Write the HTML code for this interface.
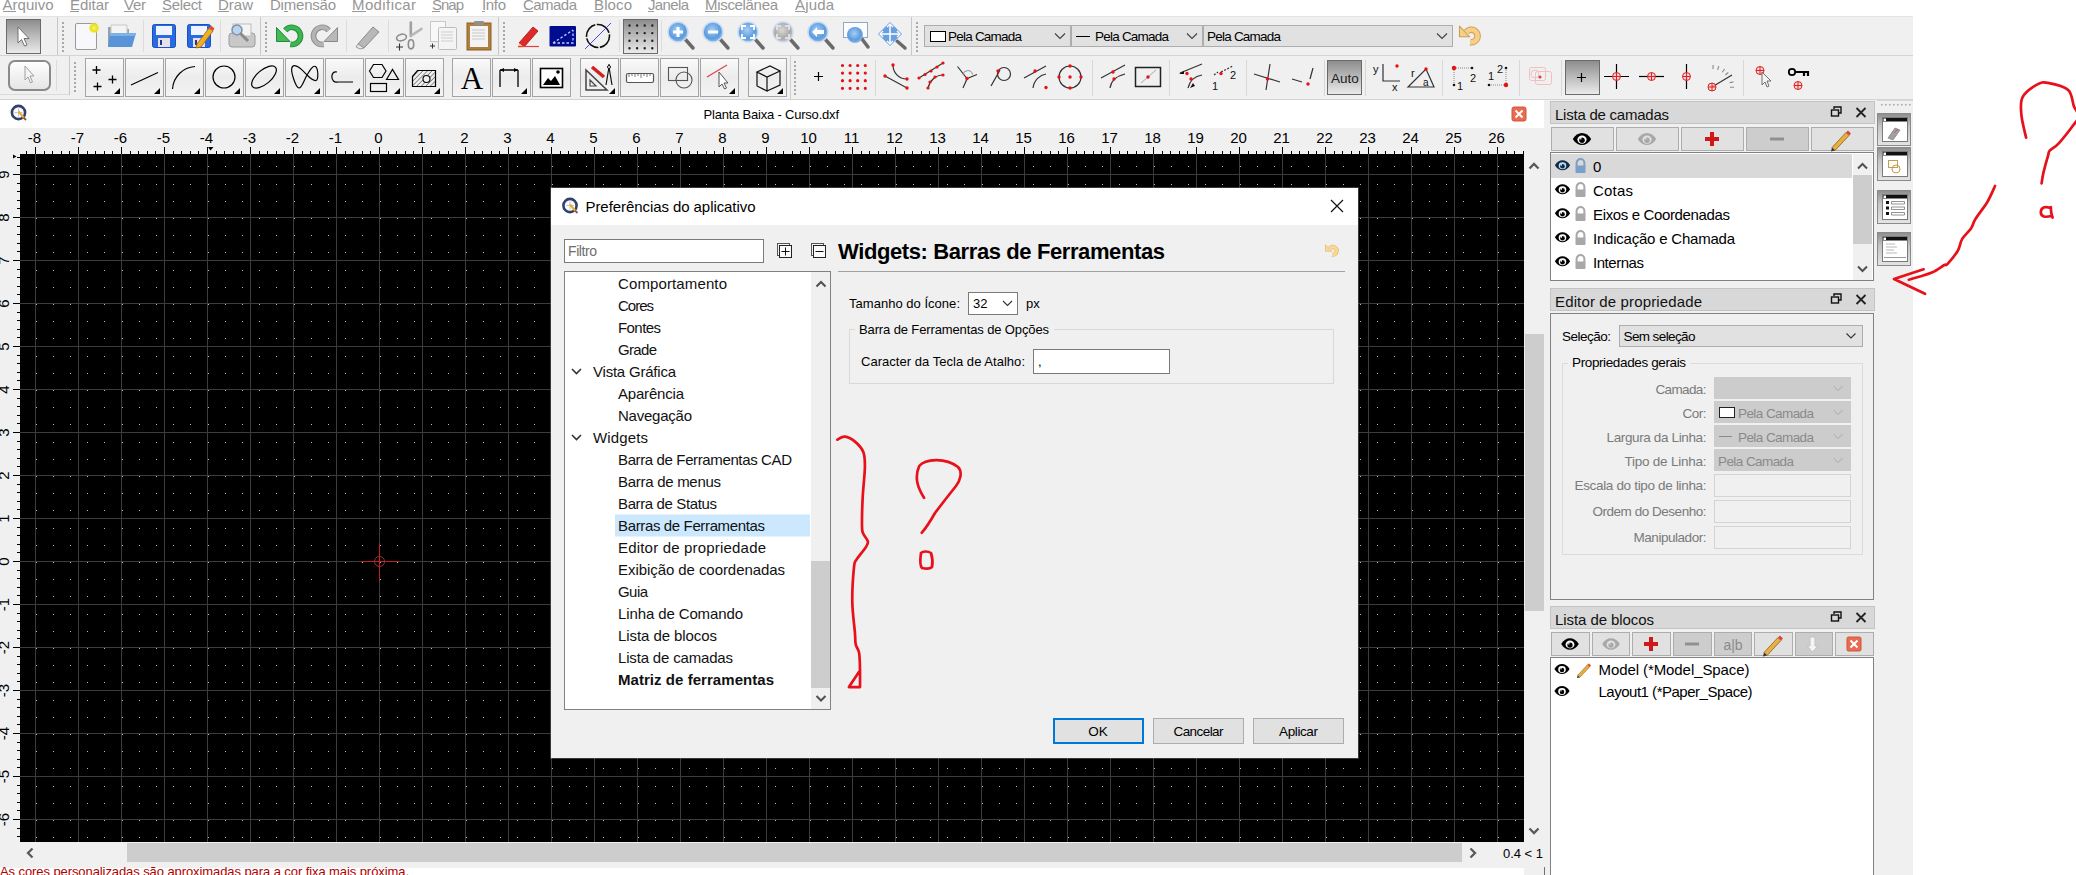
<!DOCTYPE html>
<html><head><meta charset="utf-8"><title>LibreCAD</title>
<style>
*{box-sizing:border-box;margin:0;padding:0}
html,body{width:2076px;height:875px;overflow:hidden;background:#fff;position:relative;font-family:"Liberation Sans",sans-serif;color:#000}
.a{position:absolute}
.t{position:absolute;white-space:nowrap;font-family:"Liberation Sans",sans-serif}
svg{display:block}
</style></head>
<body>

<!-- menu bar -->
<div class="a" style="left:0;top:0;width:1912px;height:16px;background:#fff"></div>
<!-- toolbar area -->
<div class="a" style="left:0;top:16px;width:1913px;height:84px;background:#f0f0f0"></div>
<!-- MDI title -->
<div class="a" style="left:0;top:100px;width:1544px;height:28px;background:#fff"></div>
<!-- rulers bg -->
<div class="a" style="left:0;top:128px;width:1544px;height:747px;background:#f0f0f0"></div>
<svg width="1524" height="26" style="position:absolute;left:0;top:128px" shape-rendering="crispEdges">
<path d="M26.5 23V26 M35.5 19V26 M44.5 23V26 M52.5 23V26 M61.5 23V26 M69.5 23V26 M78.5 19V26 M87.5 23V26 M95.5 23V26 M104.5 23V26 M112.5 23V26 M121.5 19V26 M130.5 23V26 M138.5 23V26 M147.5 23V26 M155.5 23V26 M164.5 19V26 M173.5 23V26 M181.5 23V26 M190.5 23V26 M198.5 23V26 M207.5 19V26 M216.5 23V26 M224.5 23V26 M233.5 23V26 M241.5 23V26 M250.5 19V26 M259.5 23V26 M267.5 23V26 M276.5 23V26 M284.5 23V26 M293.5 19V26 M302.5 23V26 M310.5 23V26 M319.5 23V26 M327.5 23V26 M336.5 19V26 M345.5 23V26 M353.5 23V26 M362.5 23V26 M370.5 23V26 M379.5 19V26 M388.5 23V26 M396.5 23V26 M405.5 23V26 M413.5 23V26 M422.5 19V26 M431.5 23V26 M439.5 23V26 M448.5 23V26 M456.5 23V26 M465.5 19V26 M474.5 23V26 M482.5 23V26 M491.5 23V26 M499.5 23V26 M508.5 19V26 M517.5 23V26 M525.5 23V26 M534.5 23V26 M542.5 23V26 M551.5 19V26 M560.5 23V26 M568.5 23V26 M577.5 23V26 M585.5 23V26 M594.5 19V26 M603.5 23V26 M611.5 23V26 M620.5 23V26 M628.5 23V26 M637.5 19V26 M646.5 23V26 M654.5 23V26 M663.5 23V26 M671.5 23V26 M680.5 19V26 M689.5 23V26 M697.5 23V26 M706.5 23V26 M714.5 23V26 M723.5 19V26 M732.5 23V26 M740.5 23V26 M749.5 23V26 M757.5 23V26 M766.5 19V26 M775.5 23V26 M783.5 23V26 M792.5 23V26 M800.5 23V26 M809.5 19V26 M818.5 23V26 M826.5 23V26 M835.5 23V26 M843.5 23V26 M852.5 19V26 M861.5 23V26 M869.5 23V26 M878.5 23V26 M886.5 23V26 M895.5 19V26 M904.5 23V26 M912.5 23V26 M921.5 23V26 M929.5 23V26 M938.5 19V26 M947.5 23V26 M955.5 23V26 M964.5 23V26 M972.5 23V26 M981.5 19V26 M990.5 23V26 M998.5 23V26 M1007.5 23V26 M1015.5 23V26 M1024.5 19V26 M1033.5 23V26 M1041.5 23V26 M1050.5 23V26 M1058.5 23V26 M1067.5 19V26 M1076.5 23V26 M1084.5 23V26 M1093.5 23V26 M1101.5 23V26 M1110.5 19V26 M1119.5 23V26 M1127.5 23V26 M1136.5 23V26 M1144.5 23V26 M1153.5 19V26 M1162.5 23V26 M1170.5 23V26 M1179.5 23V26 M1187.5 23V26 M1196.5 19V26 M1205.5 23V26 M1213.5 23V26 M1222.5 23V26 M1230.5 23V26 M1239.5 19V26 M1248.5 23V26 M1256.5 23V26 M1265.5 23V26 M1273.5 23V26 M1282.5 19V26 M1291.5 23V26 M1299.5 23V26 M1308.5 23V26 M1316.5 23V26 M1325.5 19V26 M1334.5 23V26 M1342.5 23V26 M1351.5 23V26 M1359.5 23V26 M1368.5 19V26 M1377.5 23V26 M1385.5 23V26 M1394.5 23V26 M1402.5 23V26 M1411.5 19V26 M1420.5 23V26 M1428.5 23V26 M1437.5 23V26 M1445.5 23V26 M1454.5 19V26 M1463.5 23V26 M1471.5 23V26 M1480.5 23V26 M1488.5 23V26 M1497.5 19V26 M1506.5 23V26 M1514.5 23V26 M1523.5 23V26" stroke="#000" fill="none"/>
<text x="34.5" y="15" text-anchor="middle" font-family="Liberation Sans" font-size="15" fill="#000">-8</text>
<text x="77.5" y="15" text-anchor="middle" font-family="Liberation Sans" font-size="15" fill="#000">-7</text>
<text x="120.5" y="15" text-anchor="middle" font-family="Liberation Sans" font-size="15" fill="#000">-6</text>
<text x="163.5" y="15" text-anchor="middle" font-family="Liberation Sans" font-size="15" fill="#000">-5</text>
<text x="206.5" y="15" text-anchor="middle" font-family="Liberation Sans" font-size="15" fill="#000">-4</text>
<text x="249.5" y="15" text-anchor="middle" font-family="Liberation Sans" font-size="15" fill="#000">-3</text>
<text x="292.5" y="15" text-anchor="middle" font-family="Liberation Sans" font-size="15" fill="#000">-2</text>
<text x="335.5" y="15" text-anchor="middle" font-family="Liberation Sans" font-size="15" fill="#000">-1</text>
<text x="378.5" y="15" text-anchor="middle" font-family="Liberation Sans" font-size="15" fill="#000">0</text>
<text x="421.5" y="15" text-anchor="middle" font-family="Liberation Sans" font-size="15" fill="#000">1</text>
<text x="464.5" y="15" text-anchor="middle" font-family="Liberation Sans" font-size="15" fill="#000">2</text>
<text x="507.5" y="15" text-anchor="middle" font-family="Liberation Sans" font-size="15" fill="#000">3</text>
<text x="550.5" y="15" text-anchor="middle" font-family="Liberation Sans" font-size="15" fill="#000">4</text>
<text x="593.5" y="15" text-anchor="middle" font-family="Liberation Sans" font-size="15" fill="#000">5</text>
<text x="636.5" y="15" text-anchor="middle" font-family="Liberation Sans" font-size="15" fill="#000">6</text>
<text x="679.5" y="15" text-anchor="middle" font-family="Liberation Sans" font-size="15" fill="#000">7</text>
<text x="722.5" y="15" text-anchor="middle" font-family="Liberation Sans" font-size="15" fill="#000">8</text>
<text x="765.5" y="15" text-anchor="middle" font-family="Liberation Sans" font-size="15" fill="#000">9</text>
<text x="808.5" y="15" text-anchor="middle" font-family="Liberation Sans" font-size="15" fill="#000">10</text>
<text x="851.5" y="15" text-anchor="middle" font-family="Liberation Sans" font-size="15" fill="#000">11</text>
<text x="894.5" y="15" text-anchor="middle" font-family="Liberation Sans" font-size="15" fill="#000">12</text>
<text x="937.5" y="15" text-anchor="middle" font-family="Liberation Sans" font-size="15" fill="#000">13</text>
<text x="980.5" y="15" text-anchor="middle" font-family="Liberation Sans" font-size="15" fill="#000">14</text>
<text x="1023.5" y="15" text-anchor="middle" font-family="Liberation Sans" font-size="15" fill="#000">15</text>
<text x="1066.5" y="15" text-anchor="middle" font-family="Liberation Sans" font-size="15" fill="#000">16</text>
<text x="1109.5" y="15" text-anchor="middle" font-family="Liberation Sans" font-size="15" fill="#000">17</text>
<text x="1152.5" y="15" text-anchor="middle" font-family="Liberation Sans" font-size="15" fill="#000">18</text>
<text x="1195.5" y="15" text-anchor="middle" font-family="Liberation Sans" font-size="15" fill="#000">19</text>
<text x="1238.5" y="15" text-anchor="middle" font-family="Liberation Sans" font-size="15" fill="#000">20</text>
<text x="1281.5" y="15" text-anchor="middle" font-family="Liberation Sans" font-size="15" fill="#000">21</text>
<text x="1324.5" y="15" text-anchor="middle" font-family="Liberation Sans" font-size="15" fill="#000">22</text>
<text x="1367.5" y="15" text-anchor="middle" font-family="Liberation Sans" font-size="15" fill="#000">23</text>
<text x="1410.5" y="15" text-anchor="middle" font-family="Liberation Sans" font-size="15" fill="#000">24</text>
<text x="1453.5" y="15" text-anchor="middle" font-family="Liberation Sans" font-size="15" fill="#000">25</text>
<text x="1496.5" y="15" text-anchor="middle" font-family="Liberation Sans" font-size="15" fill="#000">26</text>
</svg>
<svg width="20" height="688" style="position:absolute;left:0;top:154px" shape-rendering="crispEdges">
<path d="M17 682.5H20 M17 674.5H20 M13 665.5H20 M17 656.5H20 M17 648.5H20 M17 639.5H20 M17 631.5H20 M13 622.5H20 M17 613.5H20 M17 605.5H20 M17 596.5H20 M17 588.5H20 M13 579.5H20 M17 570.5H20 M17 562.5H20 M17 553.5H20 M17 545.5H20 M13 536.5H20 M17 527.5H20 M17 519.5H20 M17 510.5H20 M17 502.5H20 M13 493.5H20 M17 484.5H20 M17 476.5H20 M17 467.5H20 M17 459.5H20 M13 450.5H20 M17 441.5H20 M17 433.5H20 M17 424.5H20 M17 416.5H20 M13 407.5H20 M17 398.5H20 M17 390.5H20 M17 381.5H20 M17 373.5H20 M13 364.5H20 M17 355.5H20 M17 347.5H20 M17 338.5H20 M17 330.5H20 M13 321.5H20 M17 312.5H20 M17 304.5H20 M17 295.5H20 M17 287.5H20 M13 278.5H20 M17 269.5H20 M17 261.5H20 M17 252.5H20 M17 244.5H20 M13 235.5H20 M17 226.5H20 M17 218.5H20 M17 209.5H20 M17 201.5H20 M13 192.5H20 M17 183.5H20 M17 175.5H20 M17 166.5H20 M17 158.5H20 M13 149.5H20 M17 140.5H20 M17 132.5H20 M17 123.5H20 M17 115.5H20 M13 106.5H20 M17 97.5H20 M17 89.5H20 M17 80.5H20 M17 72.5H20 M13 63.5H20 M17 54.5H20 M17 46.5H20 M17 37.5H20 M17 29.5H20 M13 20.5H20 M17 11.5H20 M17 3.5H20" stroke="#000" fill="none"/>
<text transform="translate(9 708.5) rotate(-90)" x="0" y="0" text-anchor="middle" font-family="Liberation Sans" font-size="15" fill="#000">-7</text>
<text transform="translate(9 665.5) rotate(-90)" x="0" y="0" text-anchor="middle" font-family="Liberation Sans" font-size="15" fill="#000">-6</text>
<text transform="translate(9 622.5) rotate(-90)" x="0" y="0" text-anchor="middle" font-family="Liberation Sans" font-size="15" fill="#000">-5</text>
<text transform="translate(9 579.5) rotate(-90)" x="0" y="0" text-anchor="middle" font-family="Liberation Sans" font-size="15" fill="#000">-4</text>
<text transform="translate(9 536.5) rotate(-90)" x="0" y="0" text-anchor="middle" font-family="Liberation Sans" font-size="15" fill="#000">-3</text>
<text transform="translate(9 493.5) rotate(-90)" x="0" y="0" text-anchor="middle" font-family="Liberation Sans" font-size="15" fill="#000">-2</text>
<text transform="translate(9 450.5) rotate(-90)" x="0" y="0" text-anchor="middle" font-family="Liberation Sans" font-size="15" fill="#000">-1</text>
<text transform="translate(9 407.5) rotate(-90)" x="0" y="0" text-anchor="middle" font-family="Liberation Sans" font-size="15" fill="#000">0</text>
<text transform="translate(9 364.5) rotate(-90)" x="0" y="0" text-anchor="middle" font-family="Liberation Sans" font-size="15" fill="#000">1</text>
<text transform="translate(9 321.5) rotate(-90)" x="0" y="0" text-anchor="middle" font-family="Liberation Sans" font-size="15" fill="#000">2</text>
<text transform="translate(9 278.5) rotate(-90)" x="0" y="0" text-anchor="middle" font-family="Liberation Sans" font-size="15" fill="#000">3</text>
<text transform="translate(9 235.5) rotate(-90)" x="0" y="0" text-anchor="middle" font-family="Liberation Sans" font-size="15" fill="#000">4</text>
<text transform="translate(9 192.5) rotate(-90)" x="0" y="0" text-anchor="middle" font-family="Liberation Sans" font-size="15" fill="#000">5</text>
<text transform="translate(9 149.5) rotate(-90)" x="0" y="0" text-anchor="middle" font-family="Liberation Sans" font-size="15" fill="#000">6</text>
<text transform="translate(9 106.5) rotate(-90)" x="0" y="0" text-anchor="middle" font-family="Liberation Sans" font-size="15" fill="#000">7</text>
<text transform="translate(9 63.5) rotate(-90)" x="0" y="0" text-anchor="middle" font-family="Liberation Sans" font-size="15" fill="#000">8</text>
<text transform="translate(9 20.5) rotate(-90)" x="0" y="0" text-anchor="middle" font-family="Liberation Sans" font-size="15" fill="#000">9</text>
</svg>
<svg width="1504" height="688" style="position:absolute;left:20px;top:154px;background:#000" shape-rendering="crispEdges">
<path d="M15.5 0V688 M58.5 0V688 M101.5 0V688 M144.5 0V688 M187.5 0V688 M230.5 0V688 M273.5 0V688 M316.5 0V688 M359.5 0V688 M402.5 0V688 M445.5 0V688 M488.5 0V688 M531.5 0V688 M574.5 0V688 M617.5 0V688 M660.5 0V688 M703.5 0V688 M746.5 0V688 M789.5 0V688 M832.5 0V688 M875.5 0V688 M918.5 0V688 M961.5 0V688 M1004.5 0V688 M1047.5 0V688 M1090.5 0V688 M1133.5 0V688 M1176.5 0V688 M1219.5 0V688 M1262.5 0V688 M1305.5 0V688 M1348.5 0V688 M1391.5 0V688 M1434.5 0V688 M1477.5 0V688 M0 20.5H1504 M0 63.5H1504 M0 106.5H1504 M0 149.5H1504 M0 192.5H1504 M0 235.5H1504 M0 278.5H1504 M0 321.5H1504 M0 364.5H1504 M0 407.5H1504 M0 450.5H1504 M0 493.5H1504 M0 536.5H1504 M0 579.5H1504 M0 622.5H1504 M0 665.5H1504" stroke="#3c3c3c" stroke-width="1" fill="none"/>
<path d="M16 12h1v1h-1zM33 12h1v1h-1zM50 12h1v1h-1zM67 12h1v1h-1zM84 12h1v1h-1zM102 12h1v1h-1zM119 12h1v1h-1zM136 12h1v1h-1zM153 12h1v1h-1zM170 12h1v1h-1zM188 12h1v1h-1zM205 12h1v1h-1zM222 12h1v1h-1zM239 12h1v1h-1zM256 12h1v1h-1zM274 12h1v1h-1zM291 12h1v1h-1zM308 12h1v1h-1zM325 12h1v1h-1zM342 12h1v1h-1zM360 12h1v1h-1zM377 12h1v1h-1zM394 12h1v1h-1zM411 12h1v1h-1zM428 12h1v1h-1zM446 12h1v1h-1zM463 12h1v1h-1zM480 12h1v1h-1zM497 12h1v1h-1zM514 12h1v1h-1zM532 12h1v1h-1zM549 12h1v1h-1zM566 12h1v1h-1zM583 12h1v1h-1zM600 12h1v1h-1zM618 12h1v1h-1zM635 12h1v1h-1zM652 12h1v1h-1zM669 12h1v1h-1zM686 12h1v1h-1zM704 12h1v1h-1zM721 12h1v1h-1zM738 12h1v1h-1zM755 12h1v1h-1zM772 12h1v1h-1zM790 12h1v1h-1zM807 12h1v1h-1zM824 12h1v1h-1zM841 12h1v1h-1zM858 12h1v1h-1zM876 12h1v1h-1zM893 12h1v1h-1zM910 12h1v1h-1zM927 12h1v1h-1zM944 12h1v1h-1zM962 12h1v1h-1zM979 12h1v1h-1zM996 12h1v1h-1zM1013 12h1v1h-1zM1030 12h1v1h-1zM1048 12h1v1h-1zM1065 12h1v1h-1zM1082 12h1v1h-1zM1099 12h1v1h-1zM1116 12h1v1h-1zM1134 12h1v1h-1zM1151 12h1v1h-1zM1168 12h1v1h-1zM1185 12h1v1h-1zM1202 12h1v1h-1zM1220 12h1v1h-1zM1237 12h1v1h-1zM1254 12h1v1h-1zM1271 12h1v1h-1zM1288 12h1v1h-1zM1306 12h1v1h-1zM1323 12h1v1h-1zM1340 12h1v1h-1zM1357 12h1v1h-1zM1374 12h1v1h-1zM1392 12h1v1h-1zM1409 12h1v1h-1zM1426 12h1v1h-1zM1443 12h1v1h-1zM1460 12h1v1h-1zM1478 12h1v1h-1zM1495 12h1v1h-1zM16 30h1v1h-1zM33 30h1v1h-1zM50 30h1v1h-1zM67 30h1v1h-1zM84 30h1v1h-1zM102 30h1v1h-1zM119 30h1v1h-1zM136 30h1v1h-1zM153 30h1v1h-1zM170 30h1v1h-1zM188 30h1v1h-1zM205 30h1v1h-1zM222 30h1v1h-1zM239 30h1v1h-1zM256 30h1v1h-1zM274 30h1v1h-1zM291 30h1v1h-1zM308 30h1v1h-1zM325 30h1v1h-1zM342 30h1v1h-1zM360 30h1v1h-1zM377 30h1v1h-1zM394 30h1v1h-1zM411 30h1v1h-1zM428 30h1v1h-1zM446 30h1v1h-1zM463 30h1v1h-1zM480 30h1v1h-1zM497 30h1v1h-1zM514 30h1v1h-1zM532 30h1v1h-1zM549 30h1v1h-1zM566 30h1v1h-1zM583 30h1v1h-1zM600 30h1v1h-1zM618 30h1v1h-1zM635 30h1v1h-1zM652 30h1v1h-1zM669 30h1v1h-1zM686 30h1v1h-1zM704 30h1v1h-1zM721 30h1v1h-1zM738 30h1v1h-1zM755 30h1v1h-1zM772 30h1v1h-1zM790 30h1v1h-1zM807 30h1v1h-1zM824 30h1v1h-1zM841 30h1v1h-1zM858 30h1v1h-1zM876 30h1v1h-1zM893 30h1v1h-1zM910 30h1v1h-1zM927 30h1v1h-1zM944 30h1v1h-1zM962 30h1v1h-1zM979 30h1v1h-1zM996 30h1v1h-1zM1013 30h1v1h-1zM1030 30h1v1h-1zM1048 30h1v1h-1zM1065 30h1v1h-1zM1082 30h1v1h-1zM1099 30h1v1h-1zM1116 30h1v1h-1zM1134 30h1v1h-1zM1151 30h1v1h-1zM1168 30h1v1h-1zM1185 30h1v1h-1zM1202 30h1v1h-1zM1220 30h1v1h-1zM1237 30h1v1h-1zM1254 30h1v1h-1zM1271 30h1v1h-1zM1288 30h1v1h-1zM1306 30h1v1h-1zM1323 30h1v1h-1zM1340 30h1v1h-1zM1357 30h1v1h-1zM1374 30h1v1h-1zM1392 30h1v1h-1zM1409 30h1v1h-1zM1426 30h1v1h-1zM1443 30h1v1h-1zM1460 30h1v1h-1zM1478 30h1v1h-1zM1495 30h1v1h-1zM16 47h1v1h-1zM33 47h1v1h-1zM50 47h1v1h-1zM67 47h1v1h-1zM84 47h1v1h-1zM102 47h1v1h-1zM119 47h1v1h-1zM136 47h1v1h-1zM153 47h1v1h-1zM170 47h1v1h-1zM188 47h1v1h-1zM205 47h1v1h-1zM222 47h1v1h-1zM239 47h1v1h-1zM256 47h1v1h-1zM274 47h1v1h-1zM291 47h1v1h-1zM308 47h1v1h-1zM325 47h1v1h-1zM342 47h1v1h-1zM360 47h1v1h-1zM377 47h1v1h-1zM394 47h1v1h-1zM411 47h1v1h-1zM428 47h1v1h-1zM446 47h1v1h-1zM463 47h1v1h-1zM480 47h1v1h-1zM497 47h1v1h-1zM514 47h1v1h-1zM532 47h1v1h-1zM549 47h1v1h-1zM566 47h1v1h-1zM583 47h1v1h-1zM600 47h1v1h-1zM618 47h1v1h-1zM635 47h1v1h-1zM652 47h1v1h-1zM669 47h1v1h-1zM686 47h1v1h-1zM704 47h1v1h-1zM721 47h1v1h-1zM738 47h1v1h-1zM755 47h1v1h-1zM772 47h1v1h-1zM790 47h1v1h-1zM807 47h1v1h-1zM824 47h1v1h-1zM841 47h1v1h-1zM858 47h1v1h-1zM876 47h1v1h-1zM893 47h1v1h-1zM910 47h1v1h-1zM927 47h1v1h-1zM944 47h1v1h-1zM962 47h1v1h-1zM979 47h1v1h-1zM996 47h1v1h-1zM1013 47h1v1h-1zM1030 47h1v1h-1zM1048 47h1v1h-1zM1065 47h1v1h-1zM1082 47h1v1h-1zM1099 47h1v1h-1zM1116 47h1v1h-1zM1134 47h1v1h-1zM1151 47h1v1h-1zM1168 47h1v1h-1zM1185 47h1v1h-1zM1202 47h1v1h-1zM1220 47h1v1h-1zM1237 47h1v1h-1zM1254 47h1v1h-1zM1271 47h1v1h-1zM1288 47h1v1h-1zM1306 47h1v1h-1zM1323 47h1v1h-1zM1340 47h1v1h-1zM1357 47h1v1h-1zM1374 47h1v1h-1zM1392 47h1v1h-1zM1409 47h1v1h-1zM1426 47h1v1h-1zM1443 47h1v1h-1zM1460 47h1v1h-1zM1478 47h1v1h-1zM1495 47h1v1h-1zM16 64h1v1h-1zM33 64h1v1h-1zM50 64h1v1h-1zM67 64h1v1h-1zM84 64h1v1h-1zM102 64h1v1h-1zM119 64h1v1h-1zM136 64h1v1h-1zM153 64h1v1h-1zM170 64h1v1h-1zM188 64h1v1h-1zM205 64h1v1h-1zM222 64h1v1h-1zM239 64h1v1h-1zM256 64h1v1h-1zM274 64h1v1h-1zM291 64h1v1h-1zM308 64h1v1h-1zM325 64h1v1h-1zM342 64h1v1h-1zM360 64h1v1h-1zM377 64h1v1h-1zM394 64h1v1h-1zM411 64h1v1h-1zM428 64h1v1h-1zM446 64h1v1h-1zM463 64h1v1h-1zM480 64h1v1h-1zM497 64h1v1h-1zM514 64h1v1h-1zM532 64h1v1h-1zM549 64h1v1h-1zM566 64h1v1h-1zM583 64h1v1h-1zM600 64h1v1h-1zM618 64h1v1h-1zM635 64h1v1h-1zM652 64h1v1h-1zM669 64h1v1h-1zM686 64h1v1h-1zM704 64h1v1h-1zM721 64h1v1h-1zM738 64h1v1h-1zM755 64h1v1h-1zM772 64h1v1h-1zM790 64h1v1h-1zM807 64h1v1h-1zM824 64h1v1h-1zM841 64h1v1h-1zM858 64h1v1h-1zM876 64h1v1h-1zM893 64h1v1h-1zM910 64h1v1h-1zM927 64h1v1h-1zM944 64h1v1h-1zM962 64h1v1h-1zM979 64h1v1h-1zM996 64h1v1h-1zM1013 64h1v1h-1zM1030 64h1v1h-1zM1048 64h1v1h-1zM1065 64h1v1h-1zM1082 64h1v1h-1zM1099 64h1v1h-1zM1116 64h1v1h-1zM1134 64h1v1h-1zM1151 64h1v1h-1zM1168 64h1v1h-1zM1185 64h1v1h-1zM1202 64h1v1h-1zM1220 64h1v1h-1zM1237 64h1v1h-1zM1254 64h1v1h-1zM1271 64h1v1h-1zM1288 64h1v1h-1zM1306 64h1v1h-1zM1323 64h1v1h-1zM1340 64h1v1h-1zM1357 64h1v1h-1zM1374 64h1v1h-1zM1392 64h1v1h-1zM1409 64h1v1h-1zM1426 64h1v1h-1zM1443 64h1v1h-1zM1460 64h1v1h-1zM1478 64h1v1h-1zM1495 64h1v1h-1zM16 81h1v1h-1zM33 81h1v1h-1zM50 81h1v1h-1zM67 81h1v1h-1zM84 81h1v1h-1zM102 81h1v1h-1zM119 81h1v1h-1zM136 81h1v1h-1zM153 81h1v1h-1zM170 81h1v1h-1zM188 81h1v1h-1zM205 81h1v1h-1zM222 81h1v1h-1zM239 81h1v1h-1zM256 81h1v1h-1zM274 81h1v1h-1zM291 81h1v1h-1zM308 81h1v1h-1zM325 81h1v1h-1zM342 81h1v1h-1zM360 81h1v1h-1zM377 81h1v1h-1zM394 81h1v1h-1zM411 81h1v1h-1zM428 81h1v1h-1zM446 81h1v1h-1zM463 81h1v1h-1zM480 81h1v1h-1zM497 81h1v1h-1zM514 81h1v1h-1zM532 81h1v1h-1zM549 81h1v1h-1zM566 81h1v1h-1zM583 81h1v1h-1zM600 81h1v1h-1zM618 81h1v1h-1zM635 81h1v1h-1zM652 81h1v1h-1zM669 81h1v1h-1zM686 81h1v1h-1zM704 81h1v1h-1zM721 81h1v1h-1zM738 81h1v1h-1zM755 81h1v1h-1zM772 81h1v1h-1zM790 81h1v1h-1zM807 81h1v1h-1zM824 81h1v1h-1zM841 81h1v1h-1zM858 81h1v1h-1zM876 81h1v1h-1zM893 81h1v1h-1zM910 81h1v1h-1zM927 81h1v1h-1zM944 81h1v1h-1zM962 81h1v1h-1zM979 81h1v1h-1zM996 81h1v1h-1zM1013 81h1v1h-1zM1030 81h1v1h-1zM1048 81h1v1h-1zM1065 81h1v1h-1zM1082 81h1v1h-1zM1099 81h1v1h-1zM1116 81h1v1h-1zM1134 81h1v1h-1zM1151 81h1v1h-1zM1168 81h1v1h-1zM1185 81h1v1h-1zM1202 81h1v1h-1zM1220 81h1v1h-1zM1237 81h1v1h-1zM1254 81h1v1h-1zM1271 81h1v1h-1zM1288 81h1v1h-1zM1306 81h1v1h-1zM1323 81h1v1h-1zM1340 81h1v1h-1zM1357 81h1v1h-1zM1374 81h1v1h-1zM1392 81h1v1h-1zM1409 81h1v1h-1zM1426 81h1v1h-1zM1443 81h1v1h-1zM1460 81h1v1h-1zM1478 81h1v1h-1zM1495 81h1v1h-1zM16 98h1v1h-1zM33 98h1v1h-1zM50 98h1v1h-1zM67 98h1v1h-1zM84 98h1v1h-1zM102 98h1v1h-1zM119 98h1v1h-1zM136 98h1v1h-1zM153 98h1v1h-1zM170 98h1v1h-1zM188 98h1v1h-1zM205 98h1v1h-1zM222 98h1v1h-1zM239 98h1v1h-1zM256 98h1v1h-1zM274 98h1v1h-1zM291 98h1v1h-1zM308 98h1v1h-1zM325 98h1v1h-1zM342 98h1v1h-1zM360 98h1v1h-1zM377 98h1v1h-1zM394 98h1v1h-1zM411 98h1v1h-1zM428 98h1v1h-1zM446 98h1v1h-1zM463 98h1v1h-1zM480 98h1v1h-1zM497 98h1v1h-1zM514 98h1v1h-1zM532 98h1v1h-1zM549 98h1v1h-1zM566 98h1v1h-1zM583 98h1v1h-1zM600 98h1v1h-1zM618 98h1v1h-1zM635 98h1v1h-1zM652 98h1v1h-1zM669 98h1v1h-1zM686 98h1v1h-1zM704 98h1v1h-1zM721 98h1v1h-1zM738 98h1v1h-1zM755 98h1v1h-1zM772 98h1v1h-1zM790 98h1v1h-1zM807 98h1v1h-1zM824 98h1v1h-1zM841 98h1v1h-1zM858 98h1v1h-1zM876 98h1v1h-1zM893 98h1v1h-1zM910 98h1v1h-1zM927 98h1v1h-1zM944 98h1v1h-1zM962 98h1v1h-1zM979 98h1v1h-1zM996 98h1v1h-1zM1013 98h1v1h-1zM1030 98h1v1h-1zM1048 98h1v1h-1zM1065 98h1v1h-1zM1082 98h1v1h-1zM1099 98h1v1h-1zM1116 98h1v1h-1zM1134 98h1v1h-1zM1151 98h1v1h-1zM1168 98h1v1h-1zM1185 98h1v1h-1zM1202 98h1v1h-1zM1220 98h1v1h-1zM1237 98h1v1h-1zM1254 98h1v1h-1zM1271 98h1v1h-1zM1288 98h1v1h-1zM1306 98h1v1h-1zM1323 98h1v1h-1zM1340 98h1v1h-1zM1357 98h1v1h-1zM1374 98h1v1h-1zM1392 98h1v1h-1zM1409 98h1v1h-1zM1426 98h1v1h-1zM1443 98h1v1h-1zM1460 98h1v1h-1zM1478 98h1v1h-1zM1495 98h1v1h-1zM16 116h1v1h-1zM33 116h1v1h-1zM50 116h1v1h-1zM67 116h1v1h-1zM84 116h1v1h-1zM102 116h1v1h-1zM119 116h1v1h-1zM136 116h1v1h-1zM153 116h1v1h-1zM170 116h1v1h-1zM188 116h1v1h-1zM205 116h1v1h-1zM222 116h1v1h-1zM239 116h1v1h-1zM256 116h1v1h-1zM274 116h1v1h-1zM291 116h1v1h-1zM308 116h1v1h-1zM325 116h1v1h-1zM342 116h1v1h-1zM360 116h1v1h-1zM377 116h1v1h-1zM394 116h1v1h-1zM411 116h1v1h-1zM428 116h1v1h-1zM446 116h1v1h-1zM463 116h1v1h-1zM480 116h1v1h-1zM497 116h1v1h-1zM514 116h1v1h-1zM532 116h1v1h-1zM549 116h1v1h-1zM566 116h1v1h-1zM583 116h1v1h-1zM600 116h1v1h-1zM618 116h1v1h-1zM635 116h1v1h-1zM652 116h1v1h-1zM669 116h1v1h-1zM686 116h1v1h-1zM704 116h1v1h-1zM721 116h1v1h-1zM738 116h1v1h-1zM755 116h1v1h-1zM772 116h1v1h-1zM790 116h1v1h-1zM807 116h1v1h-1zM824 116h1v1h-1zM841 116h1v1h-1zM858 116h1v1h-1zM876 116h1v1h-1zM893 116h1v1h-1zM910 116h1v1h-1zM927 116h1v1h-1zM944 116h1v1h-1zM962 116h1v1h-1zM979 116h1v1h-1zM996 116h1v1h-1zM1013 116h1v1h-1zM1030 116h1v1h-1zM1048 116h1v1h-1zM1065 116h1v1h-1zM1082 116h1v1h-1zM1099 116h1v1h-1zM1116 116h1v1h-1zM1134 116h1v1h-1zM1151 116h1v1h-1zM1168 116h1v1h-1zM1185 116h1v1h-1zM1202 116h1v1h-1zM1220 116h1v1h-1zM1237 116h1v1h-1zM1254 116h1v1h-1zM1271 116h1v1h-1zM1288 116h1v1h-1zM1306 116h1v1h-1zM1323 116h1v1h-1zM1340 116h1v1h-1zM1357 116h1v1h-1zM1374 116h1v1h-1zM1392 116h1v1h-1zM1409 116h1v1h-1zM1426 116h1v1h-1zM1443 116h1v1h-1zM1460 116h1v1h-1zM1478 116h1v1h-1zM1495 116h1v1h-1zM16 133h1v1h-1zM33 133h1v1h-1zM50 133h1v1h-1zM67 133h1v1h-1zM84 133h1v1h-1zM102 133h1v1h-1zM119 133h1v1h-1zM136 133h1v1h-1zM153 133h1v1h-1zM170 133h1v1h-1zM188 133h1v1h-1zM205 133h1v1h-1zM222 133h1v1h-1zM239 133h1v1h-1zM256 133h1v1h-1zM274 133h1v1h-1zM291 133h1v1h-1zM308 133h1v1h-1zM325 133h1v1h-1zM342 133h1v1h-1zM360 133h1v1h-1zM377 133h1v1h-1zM394 133h1v1h-1zM411 133h1v1h-1zM428 133h1v1h-1zM446 133h1v1h-1zM463 133h1v1h-1zM480 133h1v1h-1zM497 133h1v1h-1zM514 133h1v1h-1zM532 133h1v1h-1zM549 133h1v1h-1zM566 133h1v1h-1zM583 133h1v1h-1zM600 133h1v1h-1zM618 133h1v1h-1zM635 133h1v1h-1zM652 133h1v1h-1zM669 133h1v1h-1zM686 133h1v1h-1zM704 133h1v1h-1zM721 133h1v1h-1zM738 133h1v1h-1zM755 133h1v1h-1zM772 133h1v1h-1zM790 133h1v1h-1zM807 133h1v1h-1zM824 133h1v1h-1zM841 133h1v1h-1zM858 133h1v1h-1zM876 133h1v1h-1zM893 133h1v1h-1zM910 133h1v1h-1zM927 133h1v1h-1zM944 133h1v1h-1zM962 133h1v1h-1zM979 133h1v1h-1zM996 133h1v1h-1zM1013 133h1v1h-1zM1030 133h1v1h-1zM1048 133h1v1h-1zM1065 133h1v1h-1zM1082 133h1v1h-1zM1099 133h1v1h-1zM1116 133h1v1h-1zM1134 133h1v1h-1zM1151 133h1v1h-1zM1168 133h1v1h-1zM1185 133h1v1h-1zM1202 133h1v1h-1zM1220 133h1v1h-1zM1237 133h1v1h-1zM1254 133h1v1h-1zM1271 133h1v1h-1zM1288 133h1v1h-1zM1306 133h1v1h-1zM1323 133h1v1h-1zM1340 133h1v1h-1zM1357 133h1v1h-1zM1374 133h1v1h-1zM1392 133h1v1h-1zM1409 133h1v1h-1zM1426 133h1v1h-1zM1443 133h1v1h-1zM1460 133h1v1h-1zM1478 133h1v1h-1zM1495 133h1v1h-1zM16 150h1v1h-1zM33 150h1v1h-1zM50 150h1v1h-1zM67 150h1v1h-1zM84 150h1v1h-1zM102 150h1v1h-1zM119 150h1v1h-1zM136 150h1v1h-1zM153 150h1v1h-1zM170 150h1v1h-1zM188 150h1v1h-1zM205 150h1v1h-1zM222 150h1v1h-1zM239 150h1v1h-1zM256 150h1v1h-1zM274 150h1v1h-1zM291 150h1v1h-1zM308 150h1v1h-1zM325 150h1v1h-1zM342 150h1v1h-1zM360 150h1v1h-1zM377 150h1v1h-1zM394 150h1v1h-1zM411 150h1v1h-1zM428 150h1v1h-1zM446 150h1v1h-1zM463 150h1v1h-1zM480 150h1v1h-1zM497 150h1v1h-1zM514 150h1v1h-1zM532 150h1v1h-1zM549 150h1v1h-1zM566 150h1v1h-1zM583 150h1v1h-1zM600 150h1v1h-1zM618 150h1v1h-1zM635 150h1v1h-1zM652 150h1v1h-1zM669 150h1v1h-1zM686 150h1v1h-1zM704 150h1v1h-1zM721 150h1v1h-1zM738 150h1v1h-1zM755 150h1v1h-1zM772 150h1v1h-1zM790 150h1v1h-1zM807 150h1v1h-1zM824 150h1v1h-1zM841 150h1v1h-1zM858 150h1v1h-1zM876 150h1v1h-1zM893 150h1v1h-1zM910 150h1v1h-1zM927 150h1v1h-1zM944 150h1v1h-1zM962 150h1v1h-1zM979 150h1v1h-1zM996 150h1v1h-1zM1013 150h1v1h-1zM1030 150h1v1h-1zM1048 150h1v1h-1zM1065 150h1v1h-1zM1082 150h1v1h-1zM1099 150h1v1h-1zM1116 150h1v1h-1zM1134 150h1v1h-1zM1151 150h1v1h-1zM1168 150h1v1h-1zM1185 150h1v1h-1zM1202 150h1v1h-1zM1220 150h1v1h-1zM1237 150h1v1h-1zM1254 150h1v1h-1zM1271 150h1v1h-1zM1288 150h1v1h-1zM1306 150h1v1h-1zM1323 150h1v1h-1zM1340 150h1v1h-1zM1357 150h1v1h-1zM1374 150h1v1h-1zM1392 150h1v1h-1zM1409 150h1v1h-1zM1426 150h1v1h-1zM1443 150h1v1h-1zM1460 150h1v1h-1zM1478 150h1v1h-1zM1495 150h1v1h-1zM16 167h1v1h-1zM33 167h1v1h-1zM50 167h1v1h-1zM67 167h1v1h-1zM84 167h1v1h-1zM102 167h1v1h-1zM119 167h1v1h-1zM136 167h1v1h-1zM153 167h1v1h-1zM170 167h1v1h-1zM188 167h1v1h-1zM205 167h1v1h-1zM222 167h1v1h-1zM239 167h1v1h-1zM256 167h1v1h-1zM274 167h1v1h-1zM291 167h1v1h-1zM308 167h1v1h-1zM325 167h1v1h-1zM342 167h1v1h-1zM360 167h1v1h-1zM377 167h1v1h-1zM394 167h1v1h-1zM411 167h1v1h-1zM428 167h1v1h-1zM446 167h1v1h-1zM463 167h1v1h-1zM480 167h1v1h-1zM497 167h1v1h-1zM514 167h1v1h-1zM532 167h1v1h-1zM549 167h1v1h-1zM566 167h1v1h-1zM583 167h1v1h-1zM600 167h1v1h-1zM618 167h1v1h-1zM635 167h1v1h-1zM652 167h1v1h-1zM669 167h1v1h-1zM686 167h1v1h-1zM704 167h1v1h-1zM721 167h1v1h-1zM738 167h1v1h-1zM755 167h1v1h-1zM772 167h1v1h-1zM790 167h1v1h-1zM807 167h1v1h-1zM824 167h1v1h-1zM841 167h1v1h-1zM858 167h1v1h-1zM876 167h1v1h-1zM893 167h1v1h-1zM910 167h1v1h-1zM927 167h1v1h-1zM944 167h1v1h-1zM962 167h1v1h-1zM979 167h1v1h-1zM996 167h1v1h-1zM1013 167h1v1h-1zM1030 167h1v1h-1zM1048 167h1v1h-1zM1065 167h1v1h-1zM1082 167h1v1h-1zM1099 167h1v1h-1zM1116 167h1v1h-1zM1134 167h1v1h-1zM1151 167h1v1h-1zM1168 167h1v1h-1zM1185 167h1v1h-1zM1202 167h1v1h-1zM1220 167h1v1h-1zM1237 167h1v1h-1zM1254 167h1v1h-1zM1271 167h1v1h-1zM1288 167h1v1h-1zM1306 167h1v1h-1zM1323 167h1v1h-1zM1340 167h1v1h-1zM1357 167h1v1h-1zM1374 167h1v1h-1zM1392 167h1v1h-1zM1409 167h1v1h-1zM1426 167h1v1h-1zM1443 167h1v1h-1zM1460 167h1v1h-1zM1478 167h1v1h-1zM1495 167h1v1h-1zM16 184h1v1h-1zM33 184h1v1h-1zM50 184h1v1h-1zM67 184h1v1h-1zM84 184h1v1h-1zM102 184h1v1h-1zM119 184h1v1h-1zM136 184h1v1h-1zM153 184h1v1h-1zM170 184h1v1h-1zM188 184h1v1h-1zM205 184h1v1h-1zM222 184h1v1h-1zM239 184h1v1h-1zM256 184h1v1h-1zM274 184h1v1h-1zM291 184h1v1h-1zM308 184h1v1h-1zM325 184h1v1h-1zM342 184h1v1h-1zM360 184h1v1h-1zM377 184h1v1h-1zM394 184h1v1h-1zM411 184h1v1h-1zM428 184h1v1h-1zM446 184h1v1h-1zM463 184h1v1h-1zM480 184h1v1h-1zM497 184h1v1h-1zM514 184h1v1h-1zM532 184h1v1h-1zM549 184h1v1h-1zM566 184h1v1h-1zM583 184h1v1h-1zM600 184h1v1h-1zM618 184h1v1h-1zM635 184h1v1h-1zM652 184h1v1h-1zM669 184h1v1h-1zM686 184h1v1h-1zM704 184h1v1h-1zM721 184h1v1h-1zM738 184h1v1h-1zM755 184h1v1h-1zM772 184h1v1h-1zM790 184h1v1h-1zM807 184h1v1h-1zM824 184h1v1h-1zM841 184h1v1h-1zM858 184h1v1h-1zM876 184h1v1h-1zM893 184h1v1h-1zM910 184h1v1h-1zM927 184h1v1h-1zM944 184h1v1h-1zM962 184h1v1h-1zM979 184h1v1h-1zM996 184h1v1h-1zM1013 184h1v1h-1zM1030 184h1v1h-1zM1048 184h1v1h-1zM1065 184h1v1h-1zM1082 184h1v1h-1zM1099 184h1v1h-1zM1116 184h1v1h-1zM1134 184h1v1h-1zM1151 184h1v1h-1zM1168 184h1v1h-1zM1185 184h1v1h-1zM1202 184h1v1h-1zM1220 184h1v1h-1zM1237 184h1v1h-1zM1254 184h1v1h-1zM1271 184h1v1h-1zM1288 184h1v1h-1zM1306 184h1v1h-1zM1323 184h1v1h-1zM1340 184h1v1h-1zM1357 184h1v1h-1zM1374 184h1v1h-1zM1392 184h1v1h-1zM1409 184h1v1h-1zM1426 184h1v1h-1zM1443 184h1v1h-1zM1460 184h1v1h-1zM1478 184h1v1h-1zM1495 184h1v1h-1zM16 202h1v1h-1zM33 202h1v1h-1zM50 202h1v1h-1zM67 202h1v1h-1zM84 202h1v1h-1zM102 202h1v1h-1zM119 202h1v1h-1zM136 202h1v1h-1zM153 202h1v1h-1zM170 202h1v1h-1zM188 202h1v1h-1zM205 202h1v1h-1zM222 202h1v1h-1zM239 202h1v1h-1zM256 202h1v1h-1zM274 202h1v1h-1zM291 202h1v1h-1zM308 202h1v1h-1zM325 202h1v1h-1zM342 202h1v1h-1zM360 202h1v1h-1zM377 202h1v1h-1zM394 202h1v1h-1zM411 202h1v1h-1zM428 202h1v1h-1zM446 202h1v1h-1zM463 202h1v1h-1zM480 202h1v1h-1zM497 202h1v1h-1zM514 202h1v1h-1zM532 202h1v1h-1zM549 202h1v1h-1zM566 202h1v1h-1zM583 202h1v1h-1zM600 202h1v1h-1zM618 202h1v1h-1zM635 202h1v1h-1zM652 202h1v1h-1zM669 202h1v1h-1zM686 202h1v1h-1zM704 202h1v1h-1zM721 202h1v1h-1zM738 202h1v1h-1zM755 202h1v1h-1zM772 202h1v1h-1zM790 202h1v1h-1zM807 202h1v1h-1zM824 202h1v1h-1zM841 202h1v1h-1zM858 202h1v1h-1zM876 202h1v1h-1zM893 202h1v1h-1zM910 202h1v1h-1zM927 202h1v1h-1zM944 202h1v1h-1zM962 202h1v1h-1zM979 202h1v1h-1zM996 202h1v1h-1zM1013 202h1v1h-1zM1030 202h1v1h-1zM1048 202h1v1h-1zM1065 202h1v1h-1zM1082 202h1v1h-1zM1099 202h1v1h-1zM1116 202h1v1h-1zM1134 202h1v1h-1zM1151 202h1v1h-1zM1168 202h1v1h-1zM1185 202h1v1h-1zM1202 202h1v1h-1zM1220 202h1v1h-1zM1237 202h1v1h-1zM1254 202h1v1h-1zM1271 202h1v1h-1zM1288 202h1v1h-1zM1306 202h1v1h-1zM1323 202h1v1h-1zM1340 202h1v1h-1zM1357 202h1v1h-1zM1374 202h1v1h-1zM1392 202h1v1h-1zM1409 202h1v1h-1zM1426 202h1v1h-1zM1443 202h1v1h-1zM1460 202h1v1h-1zM1478 202h1v1h-1zM1495 202h1v1h-1zM16 219h1v1h-1zM33 219h1v1h-1zM50 219h1v1h-1zM67 219h1v1h-1zM84 219h1v1h-1zM102 219h1v1h-1zM119 219h1v1h-1zM136 219h1v1h-1zM153 219h1v1h-1zM170 219h1v1h-1zM188 219h1v1h-1zM205 219h1v1h-1zM222 219h1v1h-1zM239 219h1v1h-1zM256 219h1v1h-1zM274 219h1v1h-1zM291 219h1v1h-1zM308 219h1v1h-1zM325 219h1v1h-1zM342 219h1v1h-1zM360 219h1v1h-1zM377 219h1v1h-1zM394 219h1v1h-1zM411 219h1v1h-1zM428 219h1v1h-1zM446 219h1v1h-1zM463 219h1v1h-1zM480 219h1v1h-1zM497 219h1v1h-1zM514 219h1v1h-1zM532 219h1v1h-1zM549 219h1v1h-1zM566 219h1v1h-1zM583 219h1v1h-1zM600 219h1v1h-1zM618 219h1v1h-1zM635 219h1v1h-1zM652 219h1v1h-1zM669 219h1v1h-1zM686 219h1v1h-1zM704 219h1v1h-1zM721 219h1v1h-1zM738 219h1v1h-1zM755 219h1v1h-1zM772 219h1v1h-1zM790 219h1v1h-1zM807 219h1v1h-1zM824 219h1v1h-1zM841 219h1v1h-1zM858 219h1v1h-1zM876 219h1v1h-1zM893 219h1v1h-1zM910 219h1v1h-1zM927 219h1v1h-1zM944 219h1v1h-1zM962 219h1v1h-1zM979 219h1v1h-1zM996 219h1v1h-1zM1013 219h1v1h-1zM1030 219h1v1h-1zM1048 219h1v1h-1zM1065 219h1v1h-1zM1082 219h1v1h-1zM1099 219h1v1h-1zM1116 219h1v1h-1zM1134 219h1v1h-1zM1151 219h1v1h-1zM1168 219h1v1h-1zM1185 219h1v1h-1zM1202 219h1v1h-1zM1220 219h1v1h-1zM1237 219h1v1h-1zM1254 219h1v1h-1zM1271 219h1v1h-1zM1288 219h1v1h-1zM1306 219h1v1h-1zM1323 219h1v1h-1zM1340 219h1v1h-1zM1357 219h1v1h-1zM1374 219h1v1h-1zM1392 219h1v1h-1zM1409 219h1v1h-1zM1426 219h1v1h-1zM1443 219h1v1h-1zM1460 219h1v1h-1zM1478 219h1v1h-1zM1495 219h1v1h-1zM16 236h1v1h-1zM33 236h1v1h-1zM50 236h1v1h-1zM67 236h1v1h-1zM84 236h1v1h-1zM102 236h1v1h-1zM119 236h1v1h-1zM136 236h1v1h-1zM153 236h1v1h-1zM170 236h1v1h-1zM188 236h1v1h-1zM205 236h1v1h-1zM222 236h1v1h-1zM239 236h1v1h-1zM256 236h1v1h-1zM274 236h1v1h-1zM291 236h1v1h-1zM308 236h1v1h-1zM325 236h1v1h-1zM342 236h1v1h-1zM360 236h1v1h-1zM377 236h1v1h-1zM394 236h1v1h-1zM411 236h1v1h-1zM428 236h1v1h-1zM446 236h1v1h-1zM463 236h1v1h-1zM480 236h1v1h-1zM497 236h1v1h-1zM514 236h1v1h-1zM532 236h1v1h-1zM549 236h1v1h-1zM566 236h1v1h-1zM583 236h1v1h-1zM600 236h1v1h-1zM618 236h1v1h-1zM635 236h1v1h-1zM652 236h1v1h-1zM669 236h1v1h-1zM686 236h1v1h-1zM704 236h1v1h-1zM721 236h1v1h-1zM738 236h1v1h-1zM755 236h1v1h-1zM772 236h1v1h-1zM790 236h1v1h-1zM807 236h1v1h-1zM824 236h1v1h-1zM841 236h1v1h-1zM858 236h1v1h-1zM876 236h1v1h-1zM893 236h1v1h-1zM910 236h1v1h-1zM927 236h1v1h-1zM944 236h1v1h-1zM962 236h1v1h-1zM979 236h1v1h-1zM996 236h1v1h-1zM1013 236h1v1h-1zM1030 236h1v1h-1zM1048 236h1v1h-1zM1065 236h1v1h-1zM1082 236h1v1h-1zM1099 236h1v1h-1zM1116 236h1v1h-1zM1134 236h1v1h-1zM1151 236h1v1h-1zM1168 236h1v1h-1zM1185 236h1v1h-1zM1202 236h1v1h-1zM1220 236h1v1h-1zM1237 236h1v1h-1zM1254 236h1v1h-1zM1271 236h1v1h-1zM1288 236h1v1h-1zM1306 236h1v1h-1zM1323 236h1v1h-1zM1340 236h1v1h-1zM1357 236h1v1h-1zM1374 236h1v1h-1zM1392 236h1v1h-1zM1409 236h1v1h-1zM1426 236h1v1h-1zM1443 236h1v1h-1zM1460 236h1v1h-1zM1478 236h1v1h-1zM1495 236h1v1h-1zM16 253h1v1h-1zM33 253h1v1h-1zM50 253h1v1h-1zM67 253h1v1h-1zM84 253h1v1h-1zM102 253h1v1h-1zM119 253h1v1h-1zM136 253h1v1h-1zM153 253h1v1h-1zM170 253h1v1h-1zM188 253h1v1h-1zM205 253h1v1h-1zM222 253h1v1h-1zM239 253h1v1h-1zM256 253h1v1h-1zM274 253h1v1h-1zM291 253h1v1h-1zM308 253h1v1h-1zM325 253h1v1h-1zM342 253h1v1h-1zM360 253h1v1h-1zM377 253h1v1h-1zM394 253h1v1h-1zM411 253h1v1h-1zM428 253h1v1h-1zM446 253h1v1h-1zM463 253h1v1h-1zM480 253h1v1h-1zM497 253h1v1h-1zM514 253h1v1h-1zM532 253h1v1h-1zM549 253h1v1h-1zM566 253h1v1h-1zM583 253h1v1h-1zM600 253h1v1h-1zM618 253h1v1h-1zM635 253h1v1h-1zM652 253h1v1h-1zM669 253h1v1h-1zM686 253h1v1h-1zM704 253h1v1h-1zM721 253h1v1h-1zM738 253h1v1h-1zM755 253h1v1h-1zM772 253h1v1h-1zM790 253h1v1h-1zM807 253h1v1h-1zM824 253h1v1h-1zM841 253h1v1h-1zM858 253h1v1h-1zM876 253h1v1h-1zM893 253h1v1h-1zM910 253h1v1h-1zM927 253h1v1h-1zM944 253h1v1h-1zM962 253h1v1h-1zM979 253h1v1h-1zM996 253h1v1h-1zM1013 253h1v1h-1zM1030 253h1v1h-1zM1048 253h1v1h-1zM1065 253h1v1h-1zM1082 253h1v1h-1zM1099 253h1v1h-1zM1116 253h1v1h-1zM1134 253h1v1h-1zM1151 253h1v1h-1zM1168 253h1v1h-1zM1185 253h1v1h-1zM1202 253h1v1h-1zM1220 253h1v1h-1zM1237 253h1v1h-1zM1254 253h1v1h-1zM1271 253h1v1h-1zM1288 253h1v1h-1zM1306 253h1v1h-1zM1323 253h1v1h-1zM1340 253h1v1h-1zM1357 253h1v1h-1zM1374 253h1v1h-1zM1392 253h1v1h-1zM1409 253h1v1h-1zM1426 253h1v1h-1zM1443 253h1v1h-1zM1460 253h1v1h-1zM1478 253h1v1h-1zM1495 253h1v1h-1zM16 270h1v1h-1zM33 270h1v1h-1zM50 270h1v1h-1zM67 270h1v1h-1zM84 270h1v1h-1zM102 270h1v1h-1zM119 270h1v1h-1zM136 270h1v1h-1zM153 270h1v1h-1zM170 270h1v1h-1zM188 270h1v1h-1zM205 270h1v1h-1zM222 270h1v1h-1zM239 270h1v1h-1zM256 270h1v1h-1zM274 270h1v1h-1zM291 270h1v1h-1zM308 270h1v1h-1zM325 270h1v1h-1zM342 270h1v1h-1zM360 270h1v1h-1zM377 270h1v1h-1zM394 270h1v1h-1zM411 270h1v1h-1zM428 270h1v1h-1zM446 270h1v1h-1zM463 270h1v1h-1zM480 270h1v1h-1zM497 270h1v1h-1zM514 270h1v1h-1zM532 270h1v1h-1zM549 270h1v1h-1zM566 270h1v1h-1zM583 270h1v1h-1zM600 270h1v1h-1zM618 270h1v1h-1zM635 270h1v1h-1zM652 270h1v1h-1zM669 270h1v1h-1zM686 270h1v1h-1zM704 270h1v1h-1zM721 270h1v1h-1zM738 270h1v1h-1zM755 270h1v1h-1zM772 270h1v1h-1zM790 270h1v1h-1zM807 270h1v1h-1zM824 270h1v1h-1zM841 270h1v1h-1zM858 270h1v1h-1zM876 270h1v1h-1zM893 270h1v1h-1zM910 270h1v1h-1zM927 270h1v1h-1zM944 270h1v1h-1zM962 270h1v1h-1zM979 270h1v1h-1zM996 270h1v1h-1zM1013 270h1v1h-1zM1030 270h1v1h-1zM1048 270h1v1h-1zM1065 270h1v1h-1zM1082 270h1v1h-1zM1099 270h1v1h-1zM1116 270h1v1h-1zM1134 270h1v1h-1zM1151 270h1v1h-1zM1168 270h1v1h-1zM1185 270h1v1h-1zM1202 270h1v1h-1zM1220 270h1v1h-1zM1237 270h1v1h-1zM1254 270h1v1h-1zM1271 270h1v1h-1zM1288 270h1v1h-1zM1306 270h1v1h-1zM1323 270h1v1h-1zM1340 270h1v1h-1zM1357 270h1v1h-1zM1374 270h1v1h-1zM1392 270h1v1h-1zM1409 270h1v1h-1zM1426 270h1v1h-1zM1443 270h1v1h-1zM1460 270h1v1h-1zM1478 270h1v1h-1zM1495 270h1v1h-1zM16 288h1v1h-1zM33 288h1v1h-1zM50 288h1v1h-1zM67 288h1v1h-1zM84 288h1v1h-1zM102 288h1v1h-1zM119 288h1v1h-1zM136 288h1v1h-1zM153 288h1v1h-1zM170 288h1v1h-1zM188 288h1v1h-1zM205 288h1v1h-1zM222 288h1v1h-1zM239 288h1v1h-1zM256 288h1v1h-1zM274 288h1v1h-1zM291 288h1v1h-1zM308 288h1v1h-1zM325 288h1v1h-1zM342 288h1v1h-1zM360 288h1v1h-1zM377 288h1v1h-1zM394 288h1v1h-1zM411 288h1v1h-1zM428 288h1v1h-1zM446 288h1v1h-1zM463 288h1v1h-1zM480 288h1v1h-1zM497 288h1v1h-1zM514 288h1v1h-1zM532 288h1v1h-1zM549 288h1v1h-1zM566 288h1v1h-1zM583 288h1v1h-1zM600 288h1v1h-1zM618 288h1v1h-1zM635 288h1v1h-1zM652 288h1v1h-1zM669 288h1v1h-1zM686 288h1v1h-1zM704 288h1v1h-1zM721 288h1v1h-1zM738 288h1v1h-1zM755 288h1v1h-1zM772 288h1v1h-1zM790 288h1v1h-1zM807 288h1v1h-1zM824 288h1v1h-1zM841 288h1v1h-1zM858 288h1v1h-1zM876 288h1v1h-1zM893 288h1v1h-1zM910 288h1v1h-1zM927 288h1v1h-1zM944 288h1v1h-1zM962 288h1v1h-1zM979 288h1v1h-1zM996 288h1v1h-1zM1013 288h1v1h-1zM1030 288h1v1h-1zM1048 288h1v1h-1zM1065 288h1v1h-1zM1082 288h1v1h-1zM1099 288h1v1h-1zM1116 288h1v1h-1zM1134 288h1v1h-1zM1151 288h1v1h-1zM1168 288h1v1h-1zM1185 288h1v1h-1zM1202 288h1v1h-1zM1220 288h1v1h-1zM1237 288h1v1h-1zM1254 288h1v1h-1zM1271 288h1v1h-1zM1288 288h1v1h-1zM1306 288h1v1h-1zM1323 288h1v1h-1zM1340 288h1v1h-1zM1357 288h1v1h-1zM1374 288h1v1h-1zM1392 288h1v1h-1zM1409 288h1v1h-1zM1426 288h1v1h-1zM1443 288h1v1h-1zM1460 288h1v1h-1zM1478 288h1v1h-1zM1495 288h1v1h-1zM16 305h1v1h-1zM33 305h1v1h-1zM50 305h1v1h-1zM67 305h1v1h-1zM84 305h1v1h-1zM102 305h1v1h-1zM119 305h1v1h-1zM136 305h1v1h-1zM153 305h1v1h-1zM170 305h1v1h-1zM188 305h1v1h-1zM205 305h1v1h-1zM222 305h1v1h-1zM239 305h1v1h-1zM256 305h1v1h-1zM274 305h1v1h-1zM291 305h1v1h-1zM308 305h1v1h-1zM325 305h1v1h-1zM342 305h1v1h-1zM360 305h1v1h-1zM377 305h1v1h-1zM394 305h1v1h-1zM411 305h1v1h-1zM428 305h1v1h-1zM446 305h1v1h-1zM463 305h1v1h-1zM480 305h1v1h-1zM497 305h1v1h-1zM514 305h1v1h-1zM532 305h1v1h-1zM549 305h1v1h-1zM566 305h1v1h-1zM583 305h1v1h-1zM600 305h1v1h-1zM618 305h1v1h-1zM635 305h1v1h-1zM652 305h1v1h-1zM669 305h1v1h-1zM686 305h1v1h-1zM704 305h1v1h-1zM721 305h1v1h-1zM738 305h1v1h-1zM755 305h1v1h-1zM772 305h1v1h-1zM790 305h1v1h-1zM807 305h1v1h-1zM824 305h1v1h-1zM841 305h1v1h-1zM858 305h1v1h-1zM876 305h1v1h-1zM893 305h1v1h-1zM910 305h1v1h-1zM927 305h1v1h-1zM944 305h1v1h-1zM962 305h1v1h-1zM979 305h1v1h-1zM996 305h1v1h-1zM1013 305h1v1h-1zM1030 305h1v1h-1zM1048 305h1v1h-1zM1065 305h1v1h-1zM1082 305h1v1h-1zM1099 305h1v1h-1zM1116 305h1v1h-1zM1134 305h1v1h-1zM1151 305h1v1h-1zM1168 305h1v1h-1zM1185 305h1v1h-1zM1202 305h1v1h-1zM1220 305h1v1h-1zM1237 305h1v1h-1zM1254 305h1v1h-1zM1271 305h1v1h-1zM1288 305h1v1h-1zM1306 305h1v1h-1zM1323 305h1v1h-1zM1340 305h1v1h-1zM1357 305h1v1h-1zM1374 305h1v1h-1zM1392 305h1v1h-1zM1409 305h1v1h-1zM1426 305h1v1h-1zM1443 305h1v1h-1zM1460 305h1v1h-1zM1478 305h1v1h-1zM1495 305h1v1h-1zM16 322h1v1h-1zM33 322h1v1h-1zM50 322h1v1h-1zM67 322h1v1h-1zM84 322h1v1h-1zM102 322h1v1h-1zM119 322h1v1h-1zM136 322h1v1h-1zM153 322h1v1h-1zM170 322h1v1h-1zM188 322h1v1h-1zM205 322h1v1h-1zM222 322h1v1h-1zM239 322h1v1h-1zM256 322h1v1h-1zM274 322h1v1h-1zM291 322h1v1h-1zM308 322h1v1h-1zM325 322h1v1h-1zM342 322h1v1h-1zM360 322h1v1h-1zM377 322h1v1h-1zM394 322h1v1h-1zM411 322h1v1h-1zM428 322h1v1h-1zM446 322h1v1h-1zM463 322h1v1h-1zM480 322h1v1h-1zM497 322h1v1h-1zM514 322h1v1h-1zM532 322h1v1h-1zM549 322h1v1h-1zM566 322h1v1h-1zM583 322h1v1h-1zM600 322h1v1h-1zM618 322h1v1h-1zM635 322h1v1h-1zM652 322h1v1h-1zM669 322h1v1h-1zM686 322h1v1h-1zM704 322h1v1h-1zM721 322h1v1h-1zM738 322h1v1h-1zM755 322h1v1h-1zM772 322h1v1h-1zM790 322h1v1h-1zM807 322h1v1h-1zM824 322h1v1h-1zM841 322h1v1h-1zM858 322h1v1h-1zM876 322h1v1h-1zM893 322h1v1h-1zM910 322h1v1h-1zM927 322h1v1h-1zM944 322h1v1h-1zM962 322h1v1h-1zM979 322h1v1h-1zM996 322h1v1h-1zM1013 322h1v1h-1zM1030 322h1v1h-1zM1048 322h1v1h-1zM1065 322h1v1h-1zM1082 322h1v1h-1zM1099 322h1v1h-1zM1116 322h1v1h-1zM1134 322h1v1h-1zM1151 322h1v1h-1zM1168 322h1v1h-1zM1185 322h1v1h-1zM1202 322h1v1h-1zM1220 322h1v1h-1zM1237 322h1v1h-1zM1254 322h1v1h-1zM1271 322h1v1h-1zM1288 322h1v1h-1zM1306 322h1v1h-1zM1323 322h1v1h-1zM1340 322h1v1h-1zM1357 322h1v1h-1zM1374 322h1v1h-1zM1392 322h1v1h-1zM1409 322h1v1h-1zM1426 322h1v1h-1zM1443 322h1v1h-1zM1460 322h1v1h-1zM1478 322h1v1h-1zM1495 322h1v1h-1zM16 339h1v1h-1zM33 339h1v1h-1zM50 339h1v1h-1zM67 339h1v1h-1zM84 339h1v1h-1zM102 339h1v1h-1zM119 339h1v1h-1zM136 339h1v1h-1zM153 339h1v1h-1zM170 339h1v1h-1zM188 339h1v1h-1zM205 339h1v1h-1zM222 339h1v1h-1zM239 339h1v1h-1zM256 339h1v1h-1zM274 339h1v1h-1zM291 339h1v1h-1zM308 339h1v1h-1zM325 339h1v1h-1zM342 339h1v1h-1zM360 339h1v1h-1zM377 339h1v1h-1zM394 339h1v1h-1zM411 339h1v1h-1zM428 339h1v1h-1zM446 339h1v1h-1zM463 339h1v1h-1zM480 339h1v1h-1zM497 339h1v1h-1zM514 339h1v1h-1zM532 339h1v1h-1zM549 339h1v1h-1zM566 339h1v1h-1zM583 339h1v1h-1zM600 339h1v1h-1zM618 339h1v1h-1zM635 339h1v1h-1zM652 339h1v1h-1zM669 339h1v1h-1zM686 339h1v1h-1zM704 339h1v1h-1zM721 339h1v1h-1zM738 339h1v1h-1zM755 339h1v1h-1zM772 339h1v1h-1zM790 339h1v1h-1zM807 339h1v1h-1zM824 339h1v1h-1zM841 339h1v1h-1zM858 339h1v1h-1zM876 339h1v1h-1zM893 339h1v1h-1zM910 339h1v1h-1zM927 339h1v1h-1zM944 339h1v1h-1zM962 339h1v1h-1zM979 339h1v1h-1zM996 339h1v1h-1zM1013 339h1v1h-1zM1030 339h1v1h-1zM1048 339h1v1h-1zM1065 339h1v1h-1zM1082 339h1v1h-1zM1099 339h1v1h-1zM1116 339h1v1h-1zM1134 339h1v1h-1zM1151 339h1v1h-1zM1168 339h1v1h-1zM1185 339h1v1h-1zM1202 339h1v1h-1zM1220 339h1v1h-1zM1237 339h1v1h-1zM1254 339h1v1h-1zM1271 339h1v1h-1zM1288 339h1v1h-1zM1306 339h1v1h-1zM1323 339h1v1h-1zM1340 339h1v1h-1zM1357 339h1v1h-1zM1374 339h1v1h-1zM1392 339h1v1h-1zM1409 339h1v1h-1zM1426 339h1v1h-1zM1443 339h1v1h-1zM1460 339h1v1h-1zM1478 339h1v1h-1zM1495 339h1v1h-1zM16 356h1v1h-1zM33 356h1v1h-1zM50 356h1v1h-1zM67 356h1v1h-1zM84 356h1v1h-1zM102 356h1v1h-1zM119 356h1v1h-1zM136 356h1v1h-1zM153 356h1v1h-1zM170 356h1v1h-1zM188 356h1v1h-1zM205 356h1v1h-1zM222 356h1v1h-1zM239 356h1v1h-1zM256 356h1v1h-1zM274 356h1v1h-1zM291 356h1v1h-1zM308 356h1v1h-1zM325 356h1v1h-1zM342 356h1v1h-1zM360 356h1v1h-1zM377 356h1v1h-1zM394 356h1v1h-1zM411 356h1v1h-1zM428 356h1v1h-1zM446 356h1v1h-1zM463 356h1v1h-1zM480 356h1v1h-1zM497 356h1v1h-1zM514 356h1v1h-1zM532 356h1v1h-1zM549 356h1v1h-1zM566 356h1v1h-1zM583 356h1v1h-1zM600 356h1v1h-1zM618 356h1v1h-1zM635 356h1v1h-1zM652 356h1v1h-1zM669 356h1v1h-1zM686 356h1v1h-1zM704 356h1v1h-1zM721 356h1v1h-1zM738 356h1v1h-1zM755 356h1v1h-1zM772 356h1v1h-1zM790 356h1v1h-1zM807 356h1v1h-1zM824 356h1v1h-1zM841 356h1v1h-1zM858 356h1v1h-1zM876 356h1v1h-1zM893 356h1v1h-1zM910 356h1v1h-1zM927 356h1v1h-1zM944 356h1v1h-1zM962 356h1v1h-1zM979 356h1v1h-1zM996 356h1v1h-1zM1013 356h1v1h-1zM1030 356h1v1h-1zM1048 356h1v1h-1zM1065 356h1v1h-1zM1082 356h1v1h-1zM1099 356h1v1h-1zM1116 356h1v1h-1zM1134 356h1v1h-1zM1151 356h1v1h-1zM1168 356h1v1h-1zM1185 356h1v1h-1zM1202 356h1v1h-1zM1220 356h1v1h-1zM1237 356h1v1h-1zM1254 356h1v1h-1zM1271 356h1v1h-1zM1288 356h1v1h-1zM1306 356h1v1h-1zM1323 356h1v1h-1zM1340 356h1v1h-1zM1357 356h1v1h-1zM1374 356h1v1h-1zM1392 356h1v1h-1zM1409 356h1v1h-1zM1426 356h1v1h-1zM1443 356h1v1h-1zM1460 356h1v1h-1zM1478 356h1v1h-1zM1495 356h1v1h-1zM16 374h1v1h-1zM33 374h1v1h-1zM50 374h1v1h-1zM67 374h1v1h-1zM84 374h1v1h-1zM102 374h1v1h-1zM119 374h1v1h-1zM136 374h1v1h-1zM153 374h1v1h-1zM170 374h1v1h-1zM188 374h1v1h-1zM205 374h1v1h-1zM222 374h1v1h-1zM239 374h1v1h-1zM256 374h1v1h-1zM274 374h1v1h-1zM291 374h1v1h-1zM308 374h1v1h-1zM325 374h1v1h-1zM342 374h1v1h-1zM360 374h1v1h-1zM377 374h1v1h-1zM394 374h1v1h-1zM411 374h1v1h-1zM428 374h1v1h-1zM446 374h1v1h-1zM463 374h1v1h-1zM480 374h1v1h-1zM497 374h1v1h-1zM514 374h1v1h-1zM532 374h1v1h-1zM549 374h1v1h-1zM566 374h1v1h-1zM583 374h1v1h-1zM600 374h1v1h-1zM618 374h1v1h-1zM635 374h1v1h-1zM652 374h1v1h-1zM669 374h1v1h-1zM686 374h1v1h-1zM704 374h1v1h-1zM721 374h1v1h-1zM738 374h1v1h-1zM755 374h1v1h-1zM772 374h1v1h-1zM790 374h1v1h-1zM807 374h1v1h-1zM824 374h1v1h-1zM841 374h1v1h-1zM858 374h1v1h-1zM876 374h1v1h-1zM893 374h1v1h-1zM910 374h1v1h-1zM927 374h1v1h-1zM944 374h1v1h-1zM962 374h1v1h-1zM979 374h1v1h-1zM996 374h1v1h-1zM1013 374h1v1h-1zM1030 374h1v1h-1zM1048 374h1v1h-1zM1065 374h1v1h-1zM1082 374h1v1h-1zM1099 374h1v1h-1zM1116 374h1v1h-1zM1134 374h1v1h-1zM1151 374h1v1h-1zM1168 374h1v1h-1zM1185 374h1v1h-1zM1202 374h1v1h-1zM1220 374h1v1h-1zM1237 374h1v1h-1zM1254 374h1v1h-1zM1271 374h1v1h-1zM1288 374h1v1h-1zM1306 374h1v1h-1zM1323 374h1v1h-1zM1340 374h1v1h-1zM1357 374h1v1h-1zM1374 374h1v1h-1zM1392 374h1v1h-1zM1409 374h1v1h-1zM1426 374h1v1h-1zM1443 374h1v1h-1zM1460 374h1v1h-1zM1478 374h1v1h-1zM1495 374h1v1h-1zM16 391h1v1h-1zM33 391h1v1h-1zM50 391h1v1h-1zM67 391h1v1h-1zM84 391h1v1h-1zM102 391h1v1h-1zM119 391h1v1h-1zM136 391h1v1h-1zM153 391h1v1h-1zM170 391h1v1h-1zM188 391h1v1h-1zM205 391h1v1h-1zM222 391h1v1h-1zM239 391h1v1h-1zM256 391h1v1h-1zM274 391h1v1h-1zM291 391h1v1h-1zM308 391h1v1h-1zM325 391h1v1h-1zM342 391h1v1h-1zM360 391h1v1h-1zM377 391h1v1h-1zM394 391h1v1h-1zM411 391h1v1h-1zM428 391h1v1h-1zM446 391h1v1h-1zM463 391h1v1h-1zM480 391h1v1h-1zM497 391h1v1h-1zM514 391h1v1h-1zM532 391h1v1h-1zM549 391h1v1h-1zM566 391h1v1h-1zM583 391h1v1h-1zM600 391h1v1h-1zM618 391h1v1h-1zM635 391h1v1h-1zM652 391h1v1h-1zM669 391h1v1h-1zM686 391h1v1h-1zM704 391h1v1h-1zM721 391h1v1h-1zM738 391h1v1h-1zM755 391h1v1h-1zM772 391h1v1h-1zM790 391h1v1h-1zM807 391h1v1h-1zM824 391h1v1h-1zM841 391h1v1h-1zM858 391h1v1h-1zM876 391h1v1h-1zM893 391h1v1h-1zM910 391h1v1h-1zM927 391h1v1h-1zM944 391h1v1h-1zM962 391h1v1h-1zM979 391h1v1h-1zM996 391h1v1h-1zM1013 391h1v1h-1zM1030 391h1v1h-1zM1048 391h1v1h-1zM1065 391h1v1h-1zM1082 391h1v1h-1zM1099 391h1v1h-1zM1116 391h1v1h-1zM1134 391h1v1h-1zM1151 391h1v1h-1zM1168 391h1v1h-1zM1185 391h1v1h-1zM1202 391h1v1h-1zM1220 391h1v1h-1zM1237 391h1v1h-1zM1254 391h1v1h-1zM1271 391h1v1h-1zM1288 391h1v1h-1zM1306 391h1v1h-1zM1323 391h1v1h-1zM1340 391h1v1h-1zM1357 391h1v1h-1zM1374 391h1v1h-1zM1392 391h1v1h-1zM1409 391h1v1h-1zM1426 391h1v1h-1zM1443 391h1v1h-1zM1460 391h1v1h-1zM1478 391h1v1h-1zM1495 391h1v1h-1zM16 408h1v1h-1zM33 408h1v1h-1zM50 408h1v1h-1zM67 408h1v1h-1zM84 408h1v1h-1zM102 408h1v1h-1zM119 408h1v1h-1zM136 408h1v1h-1zM153 408h1v1h-1zM170 408h1v1h-1zM188 408h1v1h-1zM205 408h1v1h-1zM222 408h1v1h-1zM239 408h1v1h-1zM256 408h1v1h-1zM274 408h1v1h-1zM291 408h1v1h-1zM308 408h1v1h-1zM325 408h1v1h-1zM342 408h1v1h-1zM360 408h1v1h-1zM377 408h1v1h-1zM394 408h1v1h-1zM411 408h1v1h-1zM428 408h1v1h-1zM446 408h1v1h-1zM463 408h1v1h-1zM480 408h1v1h-1zM497 408h1v1h-1zM514 408h1v1h-1zM532 408h1v1h-1zM549 408h1v1h-1zM566 408h1v1h-1zM583 408h1v1h-1zM600 408h1v1h-1zM618 408h1v1h-1zM635 408h1v1h-1zM652 408h1v1h-1zM669 408h1v1h-1zM686 408h1v1h-1zM704 408h1v1h-1zM721 408h1v1h-1zM738 408h1v1h-1zM755 408h1v1h-1zM772 408h1v1h-1zM790 408h1v1h-1zM807 408h1v1h-1zM824 408h1v1h-1zM841 408h1v1h-1zM858 408h1v1h-1zM876 408h1v1h-1zM893 408h1v1h-1zM910 408h1v1h-1zM927 408h1v1h-1zM944 408h1v1h-1zM962 408h1v1h-1zM979 408h1v1h-1zM996 408h1v1h-1zM1013 408h1v1h-1zM1030 408h1v1h-1zM1048 408h1v1h-1zM1065 408h1v1h-1zM1082 408h1v1h-1zM1099 408h1v1h-1zM1116 408h1v1h-1zM1134 408h1v1h-1zM1151 408h1v1h-1zM1168 408h1v1h-1zM1185 408h1v1h-1zM1202 408h1v1h-1zM1220 408h1v1h-1zM1237 408h1v1h-1zM1254 408h1v1h-1zM1271 408h1v1h-1zM1288 408h1v1h-1zM1306 408h1v1h-1zM1323 408h1v1h-1zM1340 408h1v1h-1zM1357 408h1v1h-1zM1374 408h1v1h-1zM1392 408h1v1h-1zM1409 408h1v1h-1zM1426 408h1v1h-1zM1443 408h1v1h-1zM1460 408h1v1h-1zM1478 408h1v1h-1zM1495 408h1v1h-1zM16 425h1v1h-1zM33 425h1v1h-1zM50 425h1v1h-1zM67 425h1v1h-1zM84 425h1v1h-1zM102 425h1v1h-1zM119 425h1v1h-1zM136 425h1v1h-1zM153 425h1v1h-1zM170 425h1v1h-1zM188 425h1v1h-1zM205 425h1v1h-1zM222 425h1v1h-1zM239 425h1v1h-1zM256 425h1v1h-1zM274 425h1v1h-1zM291 425h1v1h-1zM308 425h1v1h-1zM325 425h1v1h-1zM342 425h1v1h-1zM360 425h1v1h-1zM377 425h1v1h-1zM394 425h1v1h-1zM411 425h1v1h-1zM428 425h1v1h-1zM446 425h1v1h-1zM463 425h1v1h-1zM480 425h1v1h-1zM497 425h1v1h-1zM514 425h1v1h-1zM532 425h1v1h-1zM549 425h1v1h-1zM566 425h1v1h-1zM583 425h1v1h-1zM600 425h1v1h-1zM618 425h1v1h-1zM635 425h1v1h-1zM652 425h1v1h-1zM669 425h1v1h-1zM686 425h1v1h-1zM704 425h1v1h-1zM721 425h1v1h-1zM738 425h1v1h-1zM755 425h1v1h-1zM772 425h1v1h-1zM790 425h1v1h-1zM807 425h1v1h-1zM824 425h1v1h-1zM841 425h1v1h-1zM858 425h1v1h-1zM876 425h1v1h-1zM893 425h1v1h-1zM910 425h1v1h-1zM927 425h1v1h-1zM944 425h1v1h-1zM962 425h1v1h-1zM979 425h1v1h-1zM996 425h1v1h-1zM1013 425h1v1h-1zM1030 425h1v1h-1zM1048 425h1v1h-1zM1065 425h1v1h-1zM1082 425h1v1h-1zM1099 425h1v1h-1zM1116 425h1v1h-1zM1134 425h1v1h-1zM1151 425h1v1h-1zM1168 425h1v1h-1zM1185 425h1v1h-1zM1202 425h1v1h-1zM1220 425h1v1h-1zM1237 425h1v1h-1zM1254 425h1v1h-1zM1271 425h1v1h-1zM1288 425h1v1h-1zM1306 425h1v1h-1zM1323 425h1v1h-1zM1340 425h1v1h-1zM1357 425h1v1h-1zM1374 425h1v1h-1zM1392 425h1v1h-1zM1409 425h1v1h-1zM1426 425h1v1h-1zM1443 425h1v1h-1zM1460 425h1v1h-1zM1478 425h1v1h-1zM1495 425h1v1h-1zM16 442h1v1h-1zM33 442h1v1h-1zM50 442h1v1h-1zM67 442h1v1h-1zM84 442h1v1h-1zM102 442h1v1h-1zM119 442h1v1h-1zM136 442h1v1h-1zM153 442h1v1h-1zM170 442h1v1h-1zM188 442h1v1h-1zM205 442h1v1h-1zM222 442h1v1h-1zM239 442h1v1h-1zM256 442h1v1h-1zM274 442h1v1h-1zM291 442h1v1h-1zM308 442h1v1h-1zM325 442h1v1h-1zM342 442h1v1h-1zM360 442h1v1h-1zM377 442h1v1h-1zM394 442h1v1h-1zM411 442h1v1h-1zM428 442h1v1h-1zM446 442h1v1h-1zM463 442h1v1h-1zM480 442h1v1h-1zM497 442h1v1h-1zM514 442h1v1h-1zM532 442h1v1h-1zM549 442h1v1h-1zM566 442h1v1h-1zM583 442h1v1h-1zM600 442h1v1h-1zM618 442h1v1h-1zM635 442h1v1h-1zM652 442h1v1h-1zM669 442h1v1h-1zM686 442h1v1h-1zM704 442h1v1h-1zM721 442h1v1h-1zM738 442h1v1h-1zM755 442h1v1h-1zM772 442h1v1h-1zM790 442h1v1h-1zM807 442h1v1h-1zM824 442h1v1h-1zM841 442h1v1h-1zM858 442h1v1h-1zM876 442h1v1h-1zM893 442h1v1h-1zM910 442h1v1h-1zM927 442h1v1h-1zM944 442h1v1h-1zM962 442h1v1h-1zM979 442h1v1h-1zM996 442h1v1h-1zM1013 442h1v1h-1zM1030 442h1v1h-1zM1048 442h1v1h-1zM1065 442h1v1h-1zM1082 442h1v1h-1zM1099 442h1v1h-1zM1116 442h1v1h-1zM1134 442h1v1h-1zM1151 442h1v1h-1zM1168 442h1v1h-1zM1185 442h1v1h-1zM1202 442h1v1h-1zM1220 442h1v1h-1zM1237 442h1v1h-1zM1254 442h1v1h-1zM1271 442h1v1h-1zM1288 442h1v1h-1zM1306 442h1v1h-1zM1323 442h1v1h-1zM1340 442h1v1h-1zM1357 442h1v1h-1zM1374 442h1v1h-1zM1392 442h1v1h-1zM1409 442h1v1h-1zM1426 442h1v1h-1zM1443 442h1v1h-1zM1460 442h1v1h-1zM1478 442h1v1h-1zM1495 442h1v1h-1zM16 460h1v1h-1zM33 460h1v1h-1zM50 460h1v1h-1zM67 460h1v1h-1zM84 460h1v1h-1zM102 460h1v1h-1zM119 460h1v1h-1zM136 460h1v1h-1zM153 460h1v1h-1zM170 460h1v1h-1zM188 460h1v1h-1zM205 460h1v1h-1zM222 460h1v1h-1zM239 460h1v1h-1zM256 460h1v1h-1zM274 460h1v1h-1zM291 460h1v1h-1zM308 460h1v1h-1zM325 460h1v1h-1zM342 460h1v1h-1zM360 460h1v1h-1zM377 460h1v1h-1zM394 460h1v1h-1zM411 460h1v1h-1zM428 460h1v1h-1zM446 460h1v1h-1zM463 460h1v1h-1zM480 460h1v1h-1zM497 460h1v1h-1zM514 460h1v1h-1zM532 460h1v1h-1zM549 460h1v1h-1zM566 460h1v1h-1zM583 460h1v1h-1zM600 460h1v1h-1zM618 460h1v1h-1zM635 460h1v1h-1zM652 460h1v1h-1zM669 460h1v1h-1zM686 460h1v1h-1zM704 460h1v1h-1zM721 460h1v1h-1zM738 460h1v1h-1zM755 460h1v1h-1zM772 460h1v1h-1zM790 460h1v1h-1zM807 460h1v1h-1zM824 460h1v1h-1zM841 460h1v1h-1zM858 460h1v1h-1zM876 460h1v1h-1zM893 460h1v1h-1zM910 460h1v1h-1zM927 460h1v1h-1zM944 460h1v1h-1zM962 460h1v1h-1zM979 460h1v1h-1zM996 460h1v1h-1zM1013 460h1v1h-1zM1030 460h1v1h-1zM1048 460h1v1h-1zM1065 460h1v1h-1zM1082 460h1v1h-1zM1099 460h1v1h-1zM1116 460h1v1h-1zM1134 460h1v1h-1zM1151 460h1v1h-1zM1168 460h1v1h-1zM1185 460h1v1h-1zM1202 460h1v1h-1zM1220 460h1v1h-1zM1237 460h1v1h-1zM1254 460h1v1h-1zM1271 460h1v1h-1zM1288 460h1v1h-1zM1306 460h1v1h-1zM1323 460h1v1h-1zM1340 460h1v1h-1zM1357 460h1v1h-1zM1374 460h1v1h-1zM1392 460h1v1h-1zM1409 460h1v1h-1zM1426 460h1v1h-1zM1443 460h1v1h-1zM1460 460h1v1h-1zM1478 460h1v1h-1zM1495 460h1v1h-1zM16 477h1v1h-1zM33 477h1v1h-1zM50 477h1v1h-1zM67 477h1v1h-1zM84 477h1v1h-1zM102 477h1v1h-1zM119 477h1v1h-1zM136 477h1v1h-1zM153 477h1v1h-1zM170 477h1v1h-1zM188 477h1v1h-1zM205 477h1v1h-1zM222 477h1v1h-1zM239 477h1v1h-1zM256 477h1v1h-1zM274 477h1v1h-1zM291 477h1v1h-1zM308 477h1v1h-1zM325 477h1v1h-1zM342 477h1v1h-1zM360 477h1v1h-1zM377 477h1v1h-1zM394 477h1v1h-1zM411 477h1v1h-1zM428 477h1v1h-1zM446 477h1v1h-1zM463 477h1v1h-1zM480 477h1v1h-1zM497 477h1v1h-1zM514 477h1v1h-1zM532 477h1v1h-1zM549 477h1v1h-1zM566 477h1v1h-1zM583 477h1v1h-1zM600 477h1v1h-1zM618 477h1v1h-1zM635 477h1v1h-1zM652 477h1v1h-1zM669 477h1v1h-1zM686 477h1v1h-1zM704 477h1v1h-1zM721 477h1v1h-1zM738 477h1v1h-1zM755 477h1v1h-1zM772 477h1v1h-1zM790 477h1v1h-1zM807 477h1v1h-1zM824 477h1v1h-1zM841 477h1v1h-1zM858 477h1v1h-1zM876 477h1v1h-1zM893 477h1v1h-1zM910 477h1v1h-1zM927 477h1v1h-1zM944 477h1v1h-1zM962 477h1v1h-1zM979 477h1v1h-1zM996 477h1v1h-1zM1013 477h1v1h-1zM1030 477h1v1h-1zM1048 477h1v1h-1zM1065 477h1v1h-1zM1082 477h1v1h-1zM1099 477h1v1h-1zM1116 477h1v1h-1zM1134 477h1v1h-1zM1151 477h1v1h-1zM1168 477h1v1h-1zM1185 477h1v1h-1zM1202 477h1v1h-1zM1220 477h1v1h-1zM1237 477h1v1h-1zM1254 477h1v1h-1zM1271 477h1v1h-1zM1288 477h1v1h-1zM1306 477h1v1h-1zM1323 477h1v1h-1zM1340 477h1v1h-1zM1357 477h1v1h-1zM1374 477h1v1h-1zM1392 477h1v1h-1zM1409 477h1v1h-1zM1426 477h1v1h-1zM1443 477h1v1h-1zM1460 477h1v1h-1zM1478 477h1v1h-1zM1495 477h1v1h-1zM16 494h1v1h-1zM33 494h1v1h-1zM50 494h1v1h-1zM67 494h1v1h-1zM84 494h1v1h-1zM102 494h1v1h-1zM119 494h1v1h-1zM136 494h1v1h-1zM153 494h1v1h-1zM170 494h1v1h-1zM188 494h1v1h-1zM205 494h1v1h-1zM222 494h1v1h-1zM239 494h1v1h-1zM256 494h1v1h-1zM274 494h1v1h-1zM291 494h1v1h-1zM308 494h1v1h-1zM325 494h1v1h-1zM342 494h1v1h-1zM360 494h1v1h-1zM377 494h1v1h-1zM394 494h1v1h-1zM411 494h1v1h-1zM428 494h1v1h-1zM446 494h1v1h-1zM463 494h1v1h-1zM480 494h1v1h-1zM497 494h1v1h-1zM514 494h1v1h-1zM532 494h1v1h-1zM549 494h1v1h-1zM566 494h1v1h-1zM583 494h1v1h-1zM600 494h1v1h-1zM618 494h1v1h-1zM635 494h1v1h-1zM652 494h1v1h-1zM669 494h1v1h-1zM686 494h1v1h-1zM704 494h1v1h-1zM721 494h1v1h-1zM738 494h1v1h-1zM755 494h1v1h-1zM772 494h1v1h-1zM790 494h1v1h-1zM807 494h1v1h-1zM824 494h1v1h-1zM841 494h1v1h-1zM858 494h1v1h-1zM876 494h1v1h-1zM893 494h1v1h-1zM910 494h1v1h-1zM927 494h1v1h-1zM944 494h1v1h-1zM962 494h1v1h-1zM979 494h1v1h-1zM996 494h1v1h-1zM1013 494h1v1h-1zM1030 494h1v1h-1zM1048 494h1v1h-1zM1065 494h1v1h-1zM1082 494h1v1h-1zM1099 494h1v1h-1zM1116 494h1v1h-1zM1134 494h1v1h-1zM1151 494h1v1h-1zM1168 494h1v1h-1zM1185 494h1v1h-1zM1202 494h1v1h-1zM1220 494h1v1h-1zM1237 494h1v1h-1zM1254 494h1v1h-1zM1271 494h1v1h-1zM1288 494h1v1h-1zM1306 494h1v1h-1zM1323 494h1v1h-1zM1340 494h1v1h-1zM1357 494h1v1h-1zM1374 494h1v1h-1zM1392 494h1v1h-1zM1409 494h1v1h-1zM1426 494h1v1h-1zM1443 494h1v1h-1zM1460 494h1v1h-1zM1478 494h1v1h-1zM1495 494h1v1h-1zM16 511h1v1h-1zM33 511h1v1h-1zM50 511h1v1h-1zM67 511h1v1h-1zM84 511h1v1h-1zM102 511h1v1h-1zM119 511h1v1h-1zM136 511h1v1h-1zM153 511h1v1h-1zM170 511h1v1h-1zM188 511h1v1h-1zM205 511h1v1h-1zM222 511h1v1h-1zM239 511h1v1h-1zM256 511h1v1h-1zM274 511h1v1h-1zM291 511h1v1h-1zM308 511h1v1h-1zM325 511h1v1h-1zM342 511h1v1h-1zM360 511h1v1h-1zM377 511h1v1h-1zM394 511h1v1h-1zM411 511h1v1h-1zM428 511h1v1h-1zM446 511h1v1h-1zM463 511h1v1h-1zM480 511h1v1h-1zM497 511h1v1h-1zM514 511h1v1h-1zM532 511h1v1h-1zM549 511h1v1h-1zM566 511h1v1h-1zM583 511h1v1h-1zM600 511h1v1h-1zM618 511h1v1h-1zM635 511h1v1h-1zM652 511h1v1h-1zM669 511h1v1h-1zM686 511h1v1h-1zM704 511h1v1h-1zM721 511h1v1h-1zM738 511h1v1h-1zM755 511h1v1h-1zM772 511h1v1h-1zM790 511h1v1h-1zM807 511h1v1h-1zM824 511h1v1h-1zM841 511h1v1h-1zM858 511h1v1h-1zM876 511h1v1h-1zM893 511h1v1h-1zM910 511h1v1h-1zM927 511h1v1h-1zM944 511h1v1h-1zM962 511h1v1h-1zM979 511h1v1h-1zM996 511h1v1h-1zM1013 511h1v1h-1zM1030 511h1v1h-1zM1048 511h1v1h-1zM1065 511h1v1h-1zM1082 511h1v1h-1zM1099 511h1v1h-1zM1116 511h1v1h-1zM1134 511h1v1h-1zM1151 511h1v1h-1zM1168 511h1v1h-1zM1185 511h1v1h-1zM1202 511h1v1h-1zM1220 511h1v1h-1zM1237 511h1v1h-1zM1254 511h1v1h-1zM1271 511h1v1h-1zM1288 511h1v1h-1zM1306 511h1v1h-1zM1323 511h1v1h-1zM1340 511h1v1h-1zM1357 511h1v1h-1zM1374 511h1v1h-1zM1392 511h1v1h-1zM1409 511h1v1h-1zM1426 511h1v1h-1zM1443 511h1v1h-1zM1460 511h1v1h-1zM1478 511h1v1h-1zM1495 511h1v1h-1zM16 528h1v1h-1zM33 528h1v1h-1zM50 528h1v1h-1zM67 528h1v1h-1zM84 528h1v1h-1zM102 528h1v1h-1zM119 528h1v1h-1zM136 528h1v1h-1zM153 528h1v1h-1zM170 528h1v1h-1zM188 528h1v1h-1zM205 528h1v1h-1zM222 528h1v1h-1zM239 528h1v1h-1zM256 528h1v1h-1zM274 528h1v1h-1zM291 528h1v1h-1zM308 528h1v1h-1zM325 528h1v1h-1zM342 528h1v1h-1zM360 528h1v1h-1zM377 528h1v1h-1zM394 528h1v1h-1zM411 528h1v1h-1zM428 528h1v1h-1zM446 528h1v1h-1zM463 528h1v1h-1zM480 528h1v1h-1zM497 528h1v1h-1zM514 528h1v1h-1zM532 528h1v1h-1zM549 528h1v1h-1zM566 528h1v1h-1zM583 528h1v1h-1zM600 528h1v1h-1zM618 528h1v1h-1zM635 528h1v1h-1zM652 528h1v1h-1zM669 528h1v1h-1zM686 528h1v1h-1zM704 528h1v1h-1zM721 528h1v1h-1zM738 528h1v1h-1zM755 528h1v1h-1zM772 528h1v1h-1zM790 528h1v1h-1zM807 528h1v1h-1zM824 528h1v1h-1zM841 528h1v1h-1zM858 528h1v1h-1zM876 528h1v1h-1zM893 528h1v1h-1zM910 528h1v1h-1zM927 528h1v1h-1zM944 528h1v1h-1zM962 528h1v1h-1zM979 528h1v1h-1zM996 528h1v1h-1zM1013 528h1v1h-1zM1030 528h1v1h-1zM1048 528h1v1h-1zM1065 528h1v1h-1zM1082 528h1v1h-1zM1099 528h1v1h-1zM1116 528h1v1h-1zM1134 528h1v1h-1zM1151 528h1v1h-1zM1168 528h1v1h-1zM1185 528h1v1h-1zM1202 528h1v1h-1zM1220 528h1v1h-1zM1237 528h1v1h-1zM1254 528h1v1h-1zM1271 528h1v1h-1zM1288 528h1v1h-1zM1306 528h1v1h-1zM1323 528h1v1h-1zM1340 528h1v1h-1zM1357 528h1v1h-1zM1374 528h1v1h-1zM1392 528h1v1h-1zM1409 528h1v1h-1zM1426 528h1v1h-1zM1443 528h1v1h-1zM1460 528h1v1h-1zM1478 528h1v1h-1zM1495 528h1v1h-1zM16 546h1v1h-1zM33 546h1v1h-1zM50 546h1v1h-1zM67 546h1v1h-1zM84 546h1v1h-1zM102 546h1v1h-1zM119 546h1v1h-1zM136 546h1v1h-1zM153 546h1v1h-1zM170 546h1v1h-1zM188 546h1v1h-1zM205 546h1v1h-1zM222 546h1v1h-1zM239 546h1v1h-1zM256 546h1v1h-1zM274 546h1v1h-1zM291 546h1v1h-1zM308 546h1v1h-1zM325 546h1v1h-1zM342 546h1v1h-1zM360 546h1v1h-1zM377 546h1v1h-1zM394 546h1v1h-1zM411 546h1v1h-1zM428 546h1v1h-1zM446 546h1v1h-1zM463 546h1v1h-1zM480 546h1v1h-1zM497 546h1v1h-1zM514 546h1v1h-1zM532 546h1v1h-1zM549 546h1v1h-1zM566 546h1v1h-1zM583 546h1v1h-1zM600 546h1v1h-1zM618 546h1v1h-1zM635 546h1v1h-1zM652 546h1v1h-1zM669 546h1v1h-1zM686 546h1v1h-1zM704 546h1v1h-1zM721 546h1v1h-1zM738 546h1v1h-1zM755 546h1v1h-1zM772 546h1v1h-1zM790 546h1v1h-1zM807 546h1v1h-1zM824 546h1v1h-1zM841 546h1v1h-1zM858 546h1v1h-1zM876 546h1v1h-1zM893 546h1v1h-1zM910 546h1v1h-1zM927 546h1v1h-1zM944 546h1v1h-1zM962 546h1v1h-1zM979 546h1v1h-1zM996 546h1v1h-1zM1013 546h1v1h-1zM1030 546h1v1h-1zM1048 546h1v1h-1zM1065 546h1v1h-1zM1082 546h1v1h-1zM1099 546h1v1h-1zM1116 546h1v1h-1zM1134 546h1v1h-1zM1151 546h1v1h-1zM1168 546h1v1h-1zM1185 546h1v1h-1zM1202 546h1v1h-1zM1220 546h1v1h-1zM1237 546h1v1h-1zM1254 546h1v1h-1zM1271 546h1v1h-1zM1288 546h1v1h-1zM1306 546h1v1h-1zM1323 546h1v1h-1zM1340 546h1v1h-1zM1357 546h1v1h-1zM1374 546h1v1h-1zM1392 546h1v1h-1zM1409 546h1v1h-1zM1426 546h1v1h-1zM1443 546h1v1h-1zM1460 546h1v1h-1zM1478 546h1v1h-1zM1495 546h1v1h-1zM16 563h1v1h-1zM33 563h1v1h-1zM50 563h1v1h-1zM67 563h1v1h-1zM84 563h1v1h-1zM102 563h1v1h-1zM119 563h1v1h-1zM136 563h1v1h-1zM153 563h1v1h-1zM170 563h1v1h-1zM188 563h1v1h-1zM205 563h1v1h-1zM222 563h1v1h-1zM239 563h1v1h-1zM256 563h1v1h-1zM274 563h1v1h-1zM291 563h1v1h-1zM308 563h1v1h-1zM325 563h1v1h-1zM342 563h1v1h-1zM360 563h1v1h-1zM377 563h1v1h-1zM394 563h1v1h-1zM411 563h1v1h-1zM428 563h1v1h-1zM446 563h1v1h-1zM463 563h1v1h-1zM480 563h1v1h-1zM497 563h1v1h-1zM514 563h1v1h-1zM532 563h1v1h-1zM549 563h1v1h-1zM566 563h1v1h-1zM583 563h1v1h-1zM600 563h1v1h-1zM618 563h1v1h-1zM635 563h1v1h-1zM652 563h1v1h-1zM669 563h1v1h-1zM686 563h1v1h-1zM704 563h1v1h-1zM721 563h1v1h-1zM738 563h1v1h-1zM755 563h1v1h-1zM772 563h1v1h-1zM790 563h1v1h-1zM807 563h1v1h-1zM824 563h1v1h-1zM841 563h1v1h-1zM858 563h1v1h-1zM876 563h1v1h-1zM893 563h1v1h-1zM910 563h1v1h-1zM927 563h1v1h-1zM944 563h1v1h-1zM962 563h1v1h-1zM979 563h1v1h-1zM996 563h1v1h-1zM1013 563h1v1h-1zM1030 563h1v1h-1zM1048 563h1v1h-1zM1065 563h1v1h-1zM1082 563h1v1h-1zM1099 563h1v1h-1zM1116 563h1v1h-1zM1134 563h1v1h-1zM1151 563h1v1h-1zM1168 563h1v1h-1zM1185 563h1v1h-1zM1202 563h1v1h-1zM1220 563h1v1h-1zM1237 563h1v1h-1zM1254 563h1v1h-1zM1271 563h1v1h-1zM1288 563h1v1h-1zM1306 563h1v1h-1zM1323 563h1v1h-1zM1340 563h1v1h-1zM1357 563h1v1h-1zM1374 563h1v1h-1zM1392 563h1v1h-1zM1409 563h1v1h-1zM1426 563h1v1h-1zM1443 563h1v1h-1zM1460 563h1v1h-1zM1478 563h1v1h-1zM1495 563h1v1h-1zM16 580h1v1h-1zM33 580h1v1h-1zM50 580h1v1h-1zM67 580h1v1h-1zM84 580h1v1h-1zM102 580h1v1h-1zM119 580h1v1h-1zM136 580h1v1h-1zM153 580h1v1h-1zM170 580h1v1h-1zM188 580h1v1h-1zM205 580h1v1h-1zM222 580h1v1h-1zM239 580h1v1h-1zM256 580h1v1h-1zM274 580h1v1h-1zM291 580h1v1h-1zM308 580h1v1h-1zM325 580h1v1h-1zM342 580h1v1h-1zM360 580h1v1h-1zM377 580h1v1h-1zM394 580h1v1h-1zM411 580h1v1h-1zM428 580h1v1h-1zM446 580h1v1h-1zM463 580h1v1h-1zM480 580h1v1h-1zM497 580h1v1h-1zM514 580h1v1h-1zM532 580h1v1h-1zM549 580h1v1h-1zM566 580h1v1h-1zM583 580h1v1h-1zM600 580h1v1h-1zM618 580h1v1h-1zM635 580h1v1h-1zM652 580h1v1h-1zM669 580h1v1h-1zM686 580h1v1h-1zM704 580h1v1h-1zM721 580h1v1h-1zM738 580h1v1h-1zM755 580h1v1h-1zM772 580h1v1h-1zM790 580h1v1h-1zM807 580h1v1h-1zM824 580h1v1h-1zM841 580h1v1h-1zM858 580h1v1h-1zM876 580h1v1h-1zM893 580h1v1h-1zM910 580h1v1h-1zM927 580h1v1h-1zM944 580h1v1h-1zM962 580h1v1h-1zM979 580h1v1h-1zM996 580h1v1h-1zM1013 580h1v1h-1zM1030 580h1v1h-1zM1048 580h1v1h-1zM1065 580h1v1h-1zM1082 580h1v1h-1zM1099 580h1v1h-1zM1116 580h1v1h-1zM1134 580h1v1h-1zM1151 580h1v1h-1zM1168 580h1v1h-1zM1185 580h1v1h-1zM1202 580h1v1h-1zM1220 580h1v1h-1zM1237 580h1v1h-1zM1254 580h1v1h-1zM1271 580h1v1h-1zM1288 580h1v1h-1zM1306 580h1v1h-1zM1323 580h1v1h-1zM1340 580h1v1h-1zM1357 580h1v1h-1zM1374 580h1v1h-1zM1392 580h1v1h-1zM1409 580h1v1h-1zM1426 580h1v1h-1zM1443 580h1v1h-1zM1460 580h1v1h-1zM1478 580h1v1h-1zM1495 580h1v1h-1zM16 597h1v1h-1zM33 597h1v1h-1zM50 597h1v1h-1zM67 597h1v1h-1zM84 597h1v1h-1zM102 597h1v1h-1zM119 597h1v1h-1zM136 597h1v1h-1zM153 597h1v1h-1zM170 597h1v1h-1zM188 597h1v1h-1zM205 597h1v1h-1zM222 597h1v1h-1zM239 597h1v1h-1zM256 597h1v1h-1zM274 597h1v1h-1zM291 597h1v1h-1zM308 597h1v1h-1zM325 597h1v1h-1zM342 597h1v1h-1zM360 597h1v1h-1zM377 597h1v1h-1zM394 597h1v1h-1zM411 597h1v1h-1zM428 597h1v1h-1zM446 597h1v1h-1zM463 597h1v1h-1zM480 597h1v1h-1zM497 597h1v1h-1zM514 597h1v1h-1zM532 597h1v1h-1zM549 597h1v1h-1zM566 597h1v1h-1zM583 597h1v1h-1zM600 597h1v1h-1zM618 597h1v1h-1zM635 597h1v1h-1zM652 597h1v1h-1zM669 597h1v1h-1zM686 597h1v1h-1zM704 597h1v1h-1zM721 597h1v1h-1zM738 597h1v1h-1zM755 597h1v1h-1zM772 597h1v1h-1zM790 597h1v1h-1zM807 597h1v1h-1zM824 597h1v1h-1zM841 597h1v1h-1zM858 597h1v1h-1zM876 597h1v1h-1zM893 597h1v1h-1zM910 597h1v1h-1zM927 597h1v1h-1zM944 597h1v1h-1zM962 597h1v1h-1zM979 597h1v1h-1zM996 597h1v1h-1zM1013 597h1v1h-1zM1030 597h1v1h-1zM1048 597h1v1h-1zM1065 597h1v1h-1zM1082 597h1v1h-1zM1099 597h1v1h-1zM1116 597h1v1h-1zM1134 597h1v1h-1zM1151 597h1v1h-1zM1168 597h1v1h-1zM1185 597h1v1h-1zM1202 597h1v1h-1zM1220 597h1v1h-1zM1237 597h1v1h-1zM1254 597h1v1h-1zM1271 597h1v1h-1zM1288 597h1v1h-1zM1306 597h1v1h-1zM1323 597h1v1h-1zM1340 597h1v1h-1zM1357 597h1v1h-1zM1374 597h1v1h-1zM1392 597h1v1h-1zM1409 597h1v1h-1zM1426 597h1v1h-1zM1443 597h1v1h-1zM1460 597h1v1h-1zM1478 597h1v1h-1zM1495 597h1v1h-1zM16 614h1v1h-1zM33 614h1v1h-1zM50 614h1v1h-1zM67 614h1v1h-1zM84 614h1v1h-1zM102 614h1v1h-1zM119 614h1v1h-1zM136 614h1v1h-1zM153 614h1v1h-1zM170 614h1v1h-1zM188 614h1v1h-1zM205 614h1v1h-1zM222 614h1v1h-1zM239 614h1v1h-1zM256 614h1v1h-1zM274 614h1v1h-1zM291 614h1v1h-1zM308 614h1v1h-1zM325 614h1v1h-1zM342 614h1v1h-1zM360 614h1v1h-1zM377 614h1v1h-1zM394 614h1v1h-1zM411 614h1v1h-1zM428 614h1v1h-1zM446 614h1v1h-1zM463 614h1v1h-1zM480 614h1v1h-1zM497 614h1v1h-1zM514 614h1v1h-1zM532 614h1v1h-1zM549 614h1v1h-1zM566 614h1v1h-1zM583 614h1v1h-1zM600 614h1v1h-1zM618 614h1v1h-1zM635 614h1v1h-1zM652 614h1v1h-1zM669 614h1v1h-1zM686 614h1v1h-1zM704 614h1v1h-1zM721 614h1v1h-1zM738 614h1v1h-1zM755 614h1v1h-1zM772 614h1v1h-1zM790 614h1v1h-1zM807 614h1v1h-1zM824 614h1v1h-1zM841 614h1v1h-1zM858 614h1v1h-1zM876 614h1v1h-1zM893 614h1v1h-1zM910 614h1v1h-1zM927 614h1v1h-1zM944 614h1v1h-1zM962 614h1v1h-1zM979 614h1v1h-1zM996 614h1v1h-1zM1013 614h1v1h-1zM1030 614h1v1h-1zM1048 614h1v1h-1zM1065 614h1v1h-1zM1082 614h1v1h-1zM1099 614h1v1h-1zM1116 614h1v1h-1zM1134 614h1v1h-1zM1151 614h1v1h-1zM1168 614h1v1h-1zM1185 614h1v1h-1zM1202 614h1v1h-1zM1220 614h1v1h-1zM1237 614h1v1h-1zM1254 614h1v1h-1zM1271 614h1v1h-1zM1288 614h1v1h-1zM1306 614h1v1h-1zM1323 614h1v1h-1zM1340 614h1v1h-1zM1357 614h1v1h-1zM1374 614h1v1h-1zM1392 614h1v1h-1zM1409 614h1v1h-1zM1426 614h1v1h-1zM1443 614h1v1h-1zM1460 614h1v1h-1zM1478 614h1v1h-1zM1495 614h1v1h-1zM16 632h1v1h-1zM33 632h1v1h-1zM50 632h1v1h-1zM67 632h1v1h-1zM84 632h1v1h-1zM102 632h1v1h-1zM119 632h1v1h-1zM136 632h1v1h-1zM153 632h1v1h-1zM170 632h1v1h-1zM188 632h1v1h-1zM205 632h1v1h-1zM222 632h1v1h-1zM239 632h1v1h-1zM256 632h1v1h-1zM274 632h1v1h-1zM291 632h1v1h-1zM308 632h1v1h-1zM325 632h1v1h-1zM342 632h1v1h-1zM360 632h1v1h-1zM377 632h1v1h-1zM394 632h1v1h-1zM411 632h1v1h-1zM428 632h1v1h-1zM446 632h1v1h-1zM463 632h1v1h-1zM480 632h1v1h-1zM497 632h1v1h-1zM514 632h1v1h-1zM532 632h1v1h-1zM549 632h1v1h-1zM566 632h1v1h-1zM583 632h1v1h-1zM600 632h1v1h-1zM618 632h1v1h-1zM635 632h1v1h-1zM652 632h1v1h-1zM669 632h1v1h-1zM686 632h1v1h-1zM704 632h1v1h-1zM721 632h1v1h-1zM738 632h1v1h-1zM755 632h1v1h-1zM772 632h1v1h-1zM790 632h1v1h-1zM807 632h1v1h-1zM824 632h1v1h-1zM841 632h1v1h-1zM858 632h1v1h-1zM876 632h1v1h-1zM893 632h1v1h-1zM910 632h1v1h-1zM927 632h1v1h-1zM944 632h1v1h-1zM962 632h1v1h-1zM979 632h1v1h-1zM996 632h1v1h-1zM1013 632h1v1h-1zM1030 632h1v1h-1zM1048 632h1v1h-1zM1065 632h1v1h-1zM1082 632h1v1h-1zM1099 632h1v1h-1zM1116 632h1v1h-1zM1134 632h1v1h-1zM1151 632h1v1h-1zM1168 632h1v1h-1zM1185 632h1v1h-1zM1202 632h1v1h-1zM1220 632h1v1h-1zM1237 632h1v1h-1zM1254 632h1v1h-1zM1271 632h1v1h-1zM1288 632h1v1h-1zM1306 632h1v1h-1zM1323 632h1v1h-1zM1340 632h1v1h-1zM1357 632h1v1h-1zM1374 632h1v1h-1zM1392 632h1v1h-1zM1409 632h1v1h-1zM1426 632h1v1h-1zM1443 632h1v1h-1zM1460 632h1v1h-1zM1478 632h1v1h-1zM1495 632h1v1h-1zM16 649h1v1h-1zM33 649h1v1h-1zM50 649h1v1h-1zM67 649h1v1h-1zM84 649h1v1h-1zM102 649h1v1h-1zM119 649h1v1h-1zM136 649h1v1h-1zM153 649h1v1h-1zM170 649h1v1h-1zM188 649h1v1h-1zM205 649h1v1h-1zM222 649h1v1h-1zM239 649h1v1h-1zM256 649h1v1h-1zM274 649h1v1h-1zM291 649h1v1h-1zM308 649h1v1h-1zM325 649h1v1h-1zM342 649h1v1h-1zM360 649h1v1h-1zM377 649h1v1h-1zM394 649h1v1h-1zM411 649h1v1h-1zM428 649h1v1h-1zM446 649h1v1h-1zM463 649h1v1h-1zM480 649h1v1h-1zM497 649h1v1h-1zM514 649h1v1h-1zM532 649h1v1h-1zM549 649h1v1h-1zM566 649h1v1h-1zM583 649h1v1h-1zM600 649h1v1h-1zM618 649h1v1h-1zM635 649h1v1h-1zM652 649h1v1h-1zM669 649h1v1h-1zM686 649h1v1h-1zM704 649h1v1h-1zM721 649h1v1h-1zM738 649h1v1h-1zM755 649h1v1h-1zM772 649h1v1h-1zM790 649h1v1h-1zM807 649h1v1h-1zM824 649h1v1h-1zM841 649h1v1h-1zM858 649h1v1h-1zM876 649h1v1h-1zM893 649h1v1h-1zM910 649h1v1h-1zM927 649h1v1h-1zM944 649h1v1h-1zM962 649h1v1h-1zM979 649h1v1h-1zM996 649h1v1h-1zM1013 649h1v1h-1zM1030 649h1v1h-1zM1048 649h1v1h-1zM1065 649h1v1h-1zM1082 649h1v1h-1zM1099 649h1v1h-1zM1116 649h1v1h-1zM1134 649h1v1h-1zM1151 649h1v1h-1zM1168 649h1v1h-1zM1185 649h1v1h-1zM1202 649h1v1h-1zM1220 649h1v1h-1zM1237 649h1v1h-1zM1254 649h1v1h-1zM1271 649h1v1h-1zM1288 649h1v1h-1zM1306 649h1v1h-1zM1323 649h1v1h-1zM1340 649h1v1h-1zM1357 649h1v1h-1zM1374 649h1v1h-1zM1392 649h1v1h-1zM1409 649h1v1h-1zM1426 649h1v1h-1zM1443 649h1v1h-1zM1460 649h1v1h-1zM1478 649h1v1h-1zM1495 649h1v1h-1zM16 666h1v1h-1zM33 666h1v1h-1zM50 666h1v1h-1zM67 666h1v1h-1zM84 666h1v1h-1zM102 666h1v1h-1zM119 666h1v1h-1zM136 666h1v1h-1zM153 666h1v1h-1zM170 666h1v1h-1zM188 666h1v1h-1zM205 666h1v1h-1zM222 666h1v1h-1zM239 666h1v1h-1zM256 666h1v1h-1zM274 666h1v1h-1zM291 666h1v1h-1zM308 666h1v1h-1zM325 666h1v1h-1zM342 666h1v1h-1zM360 666h1v1h-1zM377 666h1v1h-1zM394 666h1v1h-1zM411 666h1v1h-1zM428 666h1v1h-1zM446 666h1v1h-1zM463 666h1v1h-1zM480 666h1v1h-1zM497 666h1v1h-1zM514 666h1v1h-1zM532 666h1v1h-1zM549 666h1v1h-1zM566 666h1v1h-1zM583 666h1v1h-1zM600 666h1v1h-1zM618 666h1v1h-1zM635 666h1v1h-1zM652 666h1v1h-1zM669 666h1v1h-1zM686 666h1v1h-1zM704 666h1v1h-1zM721 666h1v1h-1zM738 666h1v1h-1zM755 666h1v1h-1zM772 666h1v1h-1zM790 666h1v1h-1zM807 666h1v1h-1zM824 666h1v1h-1zM841 666h1v1h-1zM858 666h1v1h-1zM876 666h1v1h-1zM893 666h1v1h-1zM910 666h1v1h-1zM927 666h1v1h-1zM944 666h1v1h-1zM962 666h1v1h-1zM979 666h1v1h-1zM996 666h1v1h-1zM1013 666h1v1h-1zM1030 666h1v1h-1zM1048 666h1v1h-1zM1065 666h1v1h-1zM1082 666h1v1h-1zM1099 666h1v1h-1zM1116 666h1v1h-1zM1134 666h1v1h-1zM1151 666h1v1h-1zM1168 666h1v1h-1zM1185 666h1v1h-1zM1202 666h1v1h-1zM1220 666h1v1h-1zM1237 666h1v1h-1zM1254 666h1v1h-1zM1271 666h1v1h-1zM1288 666h1v1h-1zM1306 666h1v1h-1zM1323 666h1v1h-1zM1340 666h1v1h-1zM1357 666h1v1h-1zM1374 666h1v1h-1zM1392 666h1v1h-1zM1409 666h1v1h-1zM1426 666h1v1h-1zM1443 666h1v1h-1zM1460 666h1v1h-1zM1478 666h1v1h-1zM1495 666h1v1h-1zM16 683h1v1h-1zM33 683h1v1h-1zM50 683h1v1h-1zM67 683h1v1h-1zM84 683h1v1h-1zM102 683h1v1h-1zM119 683h1v1h-1zM136 683h1v1h-1zM153 683h1v1h-1zM170 683h1v1h-1zM188 683h1v1h-1zM205 683h1v1h-1zM222 683h1v1h-1zM239 683h1v1h-1zM256 683h1v1h-1zM274 683h1v1h-1zM291 683h1v1h-1zM308 683h1v1h-1zM325 683h1v1h-1zM342 683h1v1h-1zM360 683h1v1h-1zM377 683h1v1h-1zM394 683h1v1h-1zM411 683h1v1h-1zM428 683h1v1h-1zM446 683h1v1h-1zM463 683h1v1h-1zM480 683h1v1h-1zM497 683h1v1h-1zM514 683h1v1h-1zM532 683h1v1h-1zM549 683h1v1h-1zM566 683h1v1h-1zM583 683h1v1h-1zM600 683h1v1h-1zM618 683h1v1h-1zM635 683h1v1h-1zM652 683h1v1h-1zM669 683h1v1h-1zM686 683h1v1h-1zM704 683h1v1h-1zM721 683h1v1h-1zM738 683h1v1h-1zM755 683h1v1h-1zM772 683h1v1h-1zM790 683h1v1h-1zM807 683h1v1h-1zM824 683h1v1h-1zM841 683h1v1h-1zM858 683h1v1h-1zM876 683h1v1h-1zM893 683h1v1h-1zM910 683h1v1h-1zM927 683h1v1h-1zM944 683h1v1h-1zM962 683h1v1h-1zM979 683h1v1h-1zM996 683h1v1h-1zM1013 683h1v1h-1zM1030 683h1v1h-1zM1048 683h1v1h-1zM1065 683h1v1h-1zM1082 683h1v1h-1zM1099 683h1v1h-1zM1116 683h1v1h-1zM1134 683h1v1h-1zM1151 683h1v1h-1zM1168 683h1v1h-1zM1185 683h1v1h-1zM1202 683h1v1h-1zM1220 683h1v1h-1zM1237 683h1v1h-1zM1254 683h1v1h-1zM1271 683h1v1h-1zM1288 683h1v1h-1zM1306 683h1v1h-1zM1323 683h1v1h-1zM1340 683h1v1h-1zM1357 683h1v1h-1zM1374 683h1v1h-1zM1392 683h1v1h-1zM1409 683h1v1h-1zM1426 683h1v1h-1zM1443 683h1v1h-1zM1460 683h1v1h-1zM1478 683h1v1h-1zM1495 683h1v1h-1z" fill="#b8b8b8"/>
<path d="M340.5 407.5H378.5M359.5 388.5V426.5" stroke="#c0202a" stroke-width="1" fill="none"/>
<circle cx="359.5" cy="407.5" r="5" stroke="#a03030" fill="none" shape-rendering="geometricPrecision"/>
</svg>
<!-- dock bg -->
<div class="a" style="left:1544px;top:100px;width:369px;height:775px;background:#f0f0f0"></div>
<svg width="2076" height="875" style="position:absolute;left:0;top:0"><text x="2.5" y="10" font-family="Liberation Sans" font-size="15" fill="#969696" textLength="51" lengthAdjust="spacing" >Arquivo</text>
<text x="70" y="10" font-family="Liberation Sans" font-size="15" fill="#969696" textLength="39" lengthAdjust="spacing" >Editar</text>
<text x="124" y="10" font-family="Liberation Sans" font-size="15" fill="#969696" textLength="22" lengthAdjust="spacing" >Ver</text>
<text x="162" y="10" font-family="Liberation Sans" font-size="15" fill="#969696" textLength="40" lengthAdjust="spacing" >Select</text>
<text x="218" y="10" font-family="Liberation Sans" font-size="15" fill="#969696" textLength="35" lengthAdjust="spacing" >Draw</text>
<text x="270" y="10" font-family="Liberation Sans" font-size="15" fill="#969696" textLength="66" lengthAdjust="spacing" >Dimensão</text>
<text x="352" y="10" font-family="Liberation Sans" font-size="15" fill="#969696" textLength="64" lengthAdjust="spacing" >Modificar</text>
<text x="432" y="10" font-family="Liberation Sans" font-size="15" fill="#969696" textLength="32" lengthAdjust="spacing" >Snap</text>
<text x="482" y="10" font-family="Liberation Sans" font-size="15" fill="#969696" textLength="24" lengthAdjust="spacing" >Info</text>
<text x="523" y="10" font-family="Liberation Sans" font-size="15" fill="#969696" textLength="54" lengthAdjust="spacing" >Camada</text>
<text x="594" y="10" font-family="Liberation Sans" font-size="15" fill="#969696" textLength="38" lengthAdjust="spacing" >Bloco</text>
<text x="648" y="10" font-family="Liberation Sans" font-size="15" fill="#969696" textLength="41" lengthAdjust="spacing" >Janela</text>
<text x="705" y="10" font-family="Liberation Sans" font-size="15" fill="#969696" textLength="73" lengthAdjust="spacing" >Miscelânea</text>
<text x="795" y="10" font-family="Liberation Sans" font-size="15" fill="#969696" textLength="39" lengthAdjust="spacing" >Ajuda</text>
<path d="M3 11.5h13M70 11.5h9M124 11.5h10M162 11.5h8M218 11.5h11M284 11.5h4M352 11.5h14M432 11.5h8M482 11.5h3M523 11.5h10M594 11.5h9M648 11.5h6M705 11.5h14M795 11.5h10" stroke="#9a9a9a" stroke-width="1"/>
<g transform="translate(18.5 112.5)"><circle cx="0" cy="0" r="6.6" fill="#fafcff" stroke="#34406a" stroke-width="2.6"/><path d="M-4 0h8M0 -4v8" stroke="#b0b8d0" stroke-width="0.8"/><path d="M0 -1 L5.5 5.5" stroke="#e8b030" stroke-width="2.2"/><path d="M5 5 L7.5 7.5" stroke="#8a5a40" stroke-width="1.8"/></g>
<text x="703.5" y="118.5" font-family="Liberation Sans" font-size="13" fill="#000" textLength="135.5" lengthAdjust="spacing" >Planta Baixa - Curso.dxf</text>
<rect x="1512" y="107" width="14" height="14" rx="2" fill="#e86a50" stroke="#d05838"/><path d="M1515.5 110.5l7 7m0-7l-7 7" stroke="#fff" stroke-width="2"/>
<path d="M208 147H213.5L210.5 150.5Z" fill="#000"/><path d="M13 154.5V158.5L16.5 156.5Z" fill="#000"/>
<rect x="1525" y="334" width="19" height="277" fill="#cdcdcd"/>
<path d="M1529.5 168.5l4.5-4.5 4.5 4.5M1529.5 828.5l4.5 4.5 4.5-4.5" stroke="#5a5a5a" stroke-width="2.3" fill="none"/>
<rect x="127" y="843" width="1335" height="19" fill="#cdcdcd"/>
<path d="M32.5 848.5l-4.5 4.5 4.5 4.5M1470.5 848.5l4.5 4.5-4.5 4.5" stroke="#5a5a5a" stroke-width="2.3" fill="none"/>
<text x="1503" y="858" font-family="Liberation Sans" font-size="13" fill="#000" textLength="40" lengthAdjust="spacing" >0.4 &lt; 1</text>
<rect x="0" y="868" width="1524" height="7" fill="#fff"/><path d="M1544.5 867V875" stroke="#707070"/>
<text x="0" y="876" font-family="Liberation Sans" font-size="13" fill="#b00000" textLength="409" lengthAdjust="spacing" >As cores personalizadas são aproximadas para a cor fixa mais próxima.</text></svg><svg width="1913" height="100" style="position:absolute;left:0;top:0"><defs>
<linearGradient id="gpress" x1="0" y1="0" x2="0" y2="1"><stop offset="0" stop-color="#8c8c8c"/><stop offset="1" stop-color="#ececec"/></linearGradient>
<linearGradient id="gbtn" x1="0" y1="0" x2="0" y2="1"><stop offset="0" stop-color="#fafafa"/><stop offset="0.5" stop-color="#ececec"/><stop offset="1" stop-color="#f4f4f4"/></linearGradient>
<linearGradient id="gsel" x1="0" y1="0" x2="0" y2="1"><stop offset="0" stop-color="#ffffff"/><stop offset="1" stop-color="#e4e4e4"/></linearGradient>
<radialGradient id="gzoom" cx="0.45" cy="0.4" r="0.6"><stop offset="0" stop-color="#a9cdf2"/><stop offset="0.7" stop-color="#5b9be0"/><stop offset="1" stop-color="#8fb7e6"/></radialGradient>
<radialGradient id="gzoomg" cx="0.45" cy="0.4" r="0.6"><stop offset="0" stop-color="#d8d8d8"/><stop offset="0.7" stop-color="#a8a8a8"/><stop offset="1" stop-color="#c8c8c8"/></radialGradient>
<radialGradient id="gglow" cx="0.5" cy="0.5" r="0.5"><stop offset="0" stop-color="#f6f67a"/><stop offset="0.6" stop-color="#e8e010"/><stop offset="1" stop-color="#f0f0a0" stop-opacity="0"/></radialGradient>
<linearGradient id="gblue" x1="0" y1="0" x2="0" y2="1"><stop offset="0" stop-color="#3f7be8"/><stop offset="1" stop-color="#1f5fd8"/></linearGradient>
</defs>
<path d="M0 16.5H1913" stroke="#e4e4e4"/>
<path d="M0 55.5H1913" stroke="#d4d4d4"/>
<path d="M0 99.5H1913" stroke="#d4d4d4"/>
<rect x="6.5" y="19.5" width="34" height="34" fill="url(#gpress)" stroke="#6a6a6a"/>
<path d="M18 27 L18 43 L21.5 39.5 L24.5 46 L27 45 L24 38.5 L29 38.5 Z" fill="#fff" stroke="#707070" stroke-width="1" stroke-linejoin="round"/>
<path d="M57.5 17V55" stroke="#c8c8c8" stroke-width="1"/>
<path d="M62 22h2v2h-2zM62 26h2v2h-2zM62 30h2v2h-2zM62 34h2v2h-2zM62 38h2v2h-2zM62 42h2v2h-2zM62 46h2v2h-2zM62 50h2v2h-2z" fill="#a8a8a8"/>
<rect x="75.5" y="23.5" width="21" height="26" rx="1.5" fill="#f8f8fc" stroke="#9a9a9a"/>
<circle cx="94" cy="28" r="6" fill="url(#gglow)"/>
<path d="M108 27h9l2 2h10v17h-21z" fill="#9aa0a8"/>
<path d="M111 25h16v12h-16z" fill="#f4f4f4" stroke="#c8c8c8"/>
<path d="M110 33h26l-4 14h-24z" fill="#5a94d8"/>
<path d="M110 33h26l-1 3h-25z" fill="#7fb0e8"/>
<path d="M143.5 20V52" stroke="#dcdcdc" stroke-width="1"/>
<rect x="152.5" y="24.5" width="23" height="23" rx="2" fill="#2a6ae0" stroke="#1a50c0"/>
<rect x="156" y="26" width="16" height="9" fill="#f0f4ff"/>
<rect x="158" y="38" width="12" height="9" fill="#e8e0e8"/>
<rect x="160" y="40" width="2" height="5" fill="#1a3a90"/>
<rect x="187.5" y="24.5" width="23" height="23" rx="2" fill="#2a6ae0" stroke="#1a50c0"/>
<rect x="191" y="26" width="16" height="9" fill="#f0f4ff"/>
<rect x="193" y="38" width="12" height="9" fill="#e8e0e8"/>
<rect x="195" y="40" width="2" height="5" fill="#1a3a90"/>
<path d="M197 44 L209 28 L213 31 L201 47 L196 48 Z" fill="#f0b020" stroke="#a06010" stroke-width="0.8"/>
<path d="M209 28 L211 25.5 L214.5 28.5 L213 31 Z" fill="#e05030"/>
<path d="M220.5 20V52" stroke="#dcdcdc" stroke-width="1"/>
<rect x="229" y="33" width="26" height="14" rx="3" fill="#c8c8c8" stroke="#9a9a9a"/>
<rect x="233" y="24" width="18" height="12" fill="#f4f4f4" stroke="#bbb"/>
<circle cx="237" cy="30" r="5" fill="#b8d4f0" stroke="#8090a0" stroke-width="1.5"/>
<path d="M240 33 L248 41" stroke="#8a8a8a" stroke-width="3"/>
<path d="M260.5 17V55" stroke="#c8c8c8" stroke-width="1"/>
<path d="M265 22h2v2h-2zM265 26h2v2h-2zM265 30h2v2h-2zM265 34h2v2h-2zM265 38h2v2h-2zM265 42h2v2h-2zM265 46h2v2h-2zM265 50h2v2h-2z" fill="#a8a8a8"/>
<path d="M285.31 30.37 A8.6 8.6 0 1 1 290.41 44.37" fill="none" stroke="#228a38" stroke-width="5.6"/>
<path d="M285.31 30.37 A8.6 8.6 0 1 1 290.41 44.37" fill="none" stroke="#3cb450" stroke-width="3.8"/>
<path d="M276.5 27.5 L276.5 41.5 L290 41.5 Z" fill="#44bb55" stroke="#228a38" stroke-width="1" stroke-linejoin="round"/>
<path d="M328.69 30.37 A8.6 8.6 0 1 0 323.59 44.37" fill="none" stroke="#8a8a8a" stroke-width="5.6"/>
<path d="M328.69 30.37 A8.6 8.6 0 1 0 323.59 44.37" fill="none" stroke="#b4b4b4" stroke-width="3.8"/>
<path d="M337.5 27.5 L337.5 41.5 L324 41.5 Z" fill="#b8b8b8" stroke="#8a8a8a" stroke-width="1" stroke-linejoin="round"/>
<path d="M346.5 20V52" stroke="#dcdcdc" stroke-width="1"/>
<path d="M358 44 L373 27 L379 32 L364 48 Z" fill="#b8b8b8" stroke="#8a8a8a"/>
<path d="M358 44 L364 48 L360 49 L356 47 Z" fill="#e8e8e8" stroke="#9a9a9a"/>
<path d="M388.5 20V52" stroke="#dcdcdc" stroke-width="1"/>
<path d="M410.8 22.5V36" stroke="#a0a0a0" stroke-width="2.6" stroke-linecap="round"/>
<path d="M411.5 35.5L421.5 28.8" stroke="#b8b8b8" stroke-width="2.6" stroke-linecap="round"/>
<ellipse cx="401.5" cy="37.5" rx="5" ry="3.2" transform="rotate(-15 401.5 37.5)" fill="none" stroke="#8c8c8c" stroke-width="1.6"/>
<ellipse cx="411" cy="44.3" rx="2.7" ry="4.6" fill="none" stroke="#8c8c8c" stroke-width="1.6"/>
<path d="M396 47h7M399.5 43.5v7" stroke="#333" stroke-width="1.1"/>
<rect x="430.5" y="21.5" width="15" height="20" fill="#f8f8f8" stroke="#c8c8c8"/>
<rect x="438.5" y="27.5" width="18" height="22" rx="1" fill="#f4f4f4" stroke="#bdbdbd"/>
<path d="M441 32h12M441 35h12M441 38h12M441 41h12" stroke="#cfcfcf"/>
<path d="M430 46h5M432.5 43.5v5" stroke="#333"/>
<rect x="467" y="23" width="24" height="27" fill="#b08040" stroke="#8a6020"/>
<rect x="470" y="26" width="18" height="21" fill="#f4f4f4"/>
<rect x="474" y="21" width="10" height="4" rx="1" fill="#909090"/>
<path d="M472 30h13M472 33h13M472 36h13M472 39h13" stroke="#c8c8c8"/>
<path d="M498.5 17V55" stroke="#c8c8c8" stroke-width="1"/>
<path d="M503 22h2v2h-2zM503 26h2v2h-2zM503 30h2v2h-2zM503 34h2v2h-2zM503 38h2v2h-2zM503 42h2v2h-2zM503 46h2v2h-2zM503 50h2v2h-2z" fill="#a8a8a8"/>
<path d="M519 43 L533 27 L538 31 L524 47 Z" fill="#e02828" stroke="#a01010" stroke-width="0.8"/>
<path d="M519 43 L524 47 L518 48 Z" fill="#f0c890"/>
<path d="M518 46.5h21" stroke="#e04040" stroke-width="1.2"/>
<rect x="549.5" y="26" width="26.5" height="20.5" rx="1" fill="#000c90"/>
<path d="M553 43 L573 30 M553 43H573V30" stroke="#c0d0ff" stroke-width="1.3" stroke-dasharray="2.5 2" fill="none"/>
<circle cx="598" cy="36" r="11.5" fill="none" stroke="#101010" stroke-width="1.6" stroke-dasharray="16 1.5"/>
<path d="M585 49 L611 23" stroke="#4848e0" stroke-width="1"/>
<path d="M619.5 20V52" stroke="#dcdcdc" stroke-width="1"/>
<rect x="623.5" y="19.5" width="34" height="34" fill="url(#gpress)" stroke="#6a6a6a"/>
<path d="M629.5 25.5m-1.2 0a1.2 1.2 0 1 0 2.4 0a1.2 1.2 0 1 0 -2.4 0M629.5 33.1m-1.2 0a1.2 1.2 0 1 0 2.4 0a1.2 1.2 0 1 0 -2.4 0M629.5 40.7m-1.2 0a1.2 1.2 0 1 0 2.4 0a1.2 1.2 0 1 0 -2.4 0M629.5 48.3m-1.2 0a1.2 1.2 0 1 0 2.4 0a1.2 1.2 0 1 0 -2.4 0M637.1 25.5m-1.2 0a1.2 1.2 0 1 0 2.4 0a1.2 1.2 0 1 0 -2.4 0M637.1 33.1m-1.2 0a1.2 1.2 0 1 0 2.4 0a1.2 1.2 0 1 0 -2.4 0M637.1 40.7m-1.2 0a1.2 1.2 0 1 0 2.4 0a1.2 1.2 0 1 0 -2.4 0M637.1 48.3m-1.2 0a1.2 1.2 0 1 0 2.4 0a1.2 1.2 0 1 0 -2.4 0M644.7 25.5m-1.2 0a1.2 1.2 0 1 0 2.4 0a1.2 1.2 0 1 0 -2.4 0M644.7 33.1m-1.2 0a1.2 1.2 0 1 0 2.4 0a1.2 1.2 0 1 0 -2.4 0M644.7 40.7m-1.2 0a1.2 1.2 0 1 0 2.4 0a1.2 1.2 0 1 0 -2.4 0M644.7 48.3m-1.2 0a1.2 1.2 0 1 0 2.4 0a1.2 1.2 0 1 0 -2.4 0M652.3 25.5m-1.2 0a1.2 1.2 0 1 0 2.4 0a1.2 1.2 0 1 0 -2.4 0M652.3 33.1m-1.2 0a1.2 1.2 0 1 0 2.4 0a1.2 1.2 0 1 0 -2.4 0M652.3 40.7m-1.2 0a1.2 1.2 0 1 0 2.4 0a1.2 1.2 0 1 0 -2.4 0M652.3 48.3m-1.2 0a1.2 1.2 0 1 0 2.4 0a1.2 1.2 0 1 0 -2.4 0" fill="#202020"/>
<path d="M661.5 20V52" stroke="#dcdcdc" stroke-width="1"/>
<path d="M685 39 L693 48" stroke="#6a6a6a" stroke-width="3.5" stroke-linecap="round"/>
<circle cx="678" cy="32" r="10" fill="url(#gzoom)" stroke="#c8dcf0" stroke-width="1.5"/>
<path d="M673 32h10M678 27v10" stroke="#fff" stroke-width="3"/>
<path d="M720 39 L728 48" stroke="#6a6a6a" stroke-width="3.5" stroke-linecap="round"/>
<circle cx="713" cy="32" r="10" fill="url(#gzoom)" stroke="#c8dcf0" stroke-width="1.5"/>
<path d="M708 32h10" stroke="#fff" stroke-width="3"/>
<path d="M755 39 L763 48" stroke="#6a6a6a" stroke-width="3.5" stroke-linecap="round"/>
<circle cx="748" cy="32" r="10" fill="url(#gzoom)" stroke="#c8dcf0" stroke-width="1.5"/>
<path d="M742 30v-4h4M754 30v-4h-4M742 34v4h4M754 34v4h-4" stroke="#fff" stroke-width="1.8" fill="none"/>
<path d="M790 39 L798 48" stroke="#6a6a6a" stroke-width="3.5" stroke-linecap="round"/>
<circle cx="783" cy="32" r="10" fill="url(#gzoomg)" stroke="#c8dcf0" stroke-width="1.5"/>
<path d="M777 30v-4h4M789 30v-4h-4M777 34v4h4M789 34v4h-4" stroke="#e0e0e0" stroke-width="2" fill="none"/>
<path d="M825 39 L833 48" stroke="#6a6a6a" stroke-width="3.5" stroke-linecap="round"/>
<circle cx="818" cy="32" r="10" fill="url(#gzoom)" stroke="#c8dcf0" stroke-width="1.5"/>
<path d="M812 32 l5 -5 v3 h7 v4 h-7 v3 z" fill="#fff"/>
<rect x="843.5" y="22.5" width="24" height="15" fill="#fcfcfc" stroke="#90a8c8"/>
<path d="M862 39 L868 47" stroke="#6a6a6a" stroke-width="3.5" stroke-linecap="round"/>
<circle cx="855" cy="35" r="8" fill="url(#gzoom)"/>
<path d="M897 41 L905 48" stroke="#6a6a6a" stroke-width="3.5" stroke-linecap="round"/>
<path d="M890 22 L902 34 L890 46 L878 34 Z" fill="#6aa0e0" stroke="#a8c8f0"/>
<path d="M890 24v20M880 34h20" stroke="#fff" stroke-width="1.5"/>
<path d="M887 27l3-3 3 3M887 41l3 3 3-3M883 31l-3 3 3 3M897 31l3 3-3 3" stroke="#fff" stroke-width="1.3" fill="none"/>
<path d="M911.5 17V55" stroke="#c8c8c8" stroke-width="1"/>
<path d="M916 22h2v2h-2zM916 26h2v2h-2zM916 30h2v2h-2zM916 34h2v2h-2zM916 38h2v2h-2zM916 42h2v2h-2zM916 46h2v2h-2zM916 50h2v2h-2z" fill="#a8a8a8"/>
<rect x="924.5" y="25.5" width="146" height="21" fill="#e1e1e1" stroke="#adadad"/>
<path d="M1055 33.5 l5 5 l5 -5" stroke="#404040" stroke-width="1.1" fill="none"/>
<rect x="1071.5" y="25.5" width="131" height="21" fill="#e1e1e1" stroke="#adadad"/>
<path d="M1187 33.5 l5 5 l5 -5" stroke="#404040" stroke-width="1.1" fill="none"/>
<rect x="1203.5" y="25.5" width="249" height="21" fill="#e1e1e1" stroke="#adadad"/>
<path d="M1437 33.5 l5 5 l5 -5" stroke="#404040" stroke-width="1.1" fill="none"/>
<rect x="930.5" y="31.5" width="15" height="10" fill="#fff" stroke="#000"/>
<path d="M1076 36.5h14" stroke="#000"/>
<text x="948" y="41" font-family="Liberation Sans" font-size="13.5" fill="#000" textLength="74" lengthAdjust="spacing" >Pela Camada</text>
<text x="1095" y="41" font-family="Liberation Sans" font-size="13.5" fill="#000" textLength="74" lengthAdjust="spacing" >Pela Camada</text>
<text x="1207" y="41" font-family="Liberation Sans" font-size="13.5" fill="#000" textLength="74" lengthAdjust="spacing" >Pela Camada</text>
<g transform="translate(1471.3 36) scale(1.0)"><path d="M-4.83 -4.05 A6.3 6.3 0 1 1 -1.09 6.20" fill="none" stroke="#c9a15a" stroke-width="6.6"/><path d="M-11.8 -9.8 L-11.8 0.8 L-1.5 0.8 Z" fill="#f9cf85" stroke="#c9a15a" stroke-width="1.1" stroke-linejoin="round"/><path d="M-4.83 -4.05 A6.3 6.3 0 1 1 -1.09 6.20" fill="none" stroke="#f9cf85" stroke-width="4.6"/></g>
<rect x="9" y="61" width="41" height="29" rx="6" fill="url(#gsel)" stroke="#8a8a8a" stroke-width="2"/>
<path d="M25 66 L25 80 L28 77 L30.5 83 L32.5 82 L30 76 L34 76 Z" fill="#f4f4f4" stroke="#a0a0a0" stroke-width="1" stroke-linejoin="round"/>
<path d="M56.5 60V91" stroke="#dcdcdc" stroke-width="1"/>
<path d="M69.5 56V95" stroke="#c8c8c8" stroke-width="1"/>
<path d="M0 94.5H69" stroke="#dcdcdc"/>
<path d="M74 62h2v2h-2zM74 66h2v2h-2zM74 70h2v2h-2zM74 74h2v2h-2zM74 78h2v2h-2zM74 82h2v2h-2zM74 86h2v2h-2zM74 90h2v2h-2z" fill="#a8a8a8"/>
<rect x="85.5" y="58.5" width="38" height="38" fill="url(#gbtn)" stroke="#a4a4a4"/>
<path d="M120 94 L120 88 L114 94 Z" fill="#000"/>
<rect x="125.5" y="58.5" width="38" height="38" fill="url(#gbtn)" stroke="#a4a4a4"/>
<path d="M160 94 L160 88 L154 94 Z" fill="#000"/>
<rect x="165.5" y="58.5" width="38" height="38" fill="url(#gbtn)" stroke="#a4a4a4"/>
<path d="M200 94 L200 88 L194 94 Z" fill="#000"/>
<rect x="205.5" y="58.5" width="38" height="38" fill="url(#gbtn)" stroke="#a4a4a4"/>
<path d="M240 94 L240 88 L234 94 Z" fill="#000"/>
<rect x="245.5" y="58.5" width="38" height="38" fill="url(#gbtn)" stroke="#a4a4a4"/>
<path d="M280 94 L280 88 L274 94 Z" fill="#000"/>
<rect x="285.5" y="58.5" width="38" height="38" fill="url(#gbtn)" stroke="#a4a4a4"/>
<path d="M320 94 L320 88 L314 94 Z" fill="#000"/>
<rect x="325.5" y="58.5" width="38" height="38" fill="url(#gbtn)" stroke="#a4a4a4"/>
<path d="M360 94 L360 88 L354 94 Z" fill="#000"/>
<rect x="365.5" y="58.5" width="38" height="38" fill="url(#gbtn)" stroke="#a4a4a4"/>
<path d="M400 94 L400 88 L394 94 Z" fill="#000"/>
<rect x="405.5" y="58.5" width="38" height="38" fill="url(#gbtn)" stroke="#a4a4a4"/>
<path d="M440 94 L440 88 L434 94 Z" fill="#000"/>
<path d="M92.5 70h8M96.5 66v8M108.5 79.5h8M112.5 75.5v8M93.5 86.5h8M97.5 82.5v8" stroke="#000" stroke-width="1.3"/>
<path d="M131 85 L158 72.5" stroke="#000" stroke-width="1.2"/>
<path d="M172.5 89 A24 24 0 0 1 195 66.5" stroke="#000" stroke-width="1.2" fill="none"/>
<circle cx="224" cy="77" r="11" stroke="#000" stroke-width="1.2" fill="none"/>
<ellipse cx="264" cy="77" rx="15" ry="7" transform="rotate(-40 264 77)" stroke="#000" stroke-width="1.2" fill="none"/>
<path d="M307 75 C303 71 296 63 292.5 66.5 C289.5 70 296 88 299 88 C302 88 304 80 307 75 C310 70 313 65 315.5 66.5 C318.5 68.5 318.5 80.5 316 80.5 C313 81 310 78 307 75 Z" stroke="#000" stroke-width="1.2" fill="none"/>
<path d="M337 72 C330 70 330 84 338 82 H353" stroke="#000" stroke-width="1.2" fill="none"/>
<path d="M369.5 71 L373.5 64.5 L382 64.5 L386 71 L382 77.5 L373.5 77.5 Z M386.5 79.5 L392.5 69.5 L398.5 79.5 Z" stroke="#000" stroke-width="1.2" fill="none"/>
<rect x="370.5" y="83.5" width="16" height="8" stroke="#000" stroke-width="1.2" fill="none"/>
<defs><pattern id="ph" width="3.2" height="3.2" patternUnits="userSpaceOnUse" patternTransform="rotate(45)"><path d="M0 0V3.2" stroke="#222" stroke-width="0.9"/></pattern></defs>
<path d="M412.5 76.5 L417.5 70.5 L435.5 70.5 L435.5 86.5 L412.5 86.5 Z" fill="url(#ph)" stroke="#000" stroke-width="1.2"/>
<circle cx="426.5" cy="79" r="3.5" fill="#f0f0f0" stroke="#000" stroke-width="1.1"/>
<rect x="452.5" y="58.5" width="38" height="38" fill="url(#gbtn)" stroke="#a4a4a4"/>
<text x="472" y="89" text-anchor="middle" font-family="Liberation Serif" font-size="31" fill="#000">A</text>
<rect x="492.5" y="58.5" width="38" height="38" fill="url(#gbtn)" stroke="#a4a4a4"/>
<path d="M527 94 L527 88 L521 94 Z" fill="#000"/>
<path d="M500 70V87M518 70V87M500 70H518" stroke="#000" stroke-width="1.3" fill="none"/>
<path d="M500 70l4-2v4zM518 70l-4-2v4z" fill="#000"/>
<rect x="532.5" y="58.5" width="38" height="38" fill="url(#gbtn)" stroke="#a4a4a4"/>
<rect x="540.5" y="68.5" width="22" height="19" fill="#fff" stroke="#000" stroke-width="1.6"/>
<path d="M543 85 L548 78 L551 81 L555 76 L560 85 Z" fill="#000"/><circle cx="558" cy="72" r="1.8" fill="#000"/>
<rect x="580.5" y="58.5" width="38" height="38" fill="url(#gbtn)" stroke="#a4a4a4"/>
<path d="M615 94 L615 88 L609 94 Z" fill="#000"/>
<rect x="620.5" y="58.5" width="38" height="38" fill="url(#gbtn)" stroke="#a4a4a4"/>
<rect x="660.5" y="58.5" width="38" height="38" fill="url(#gbtn)" stroke="#a4a4a4"/>
<rect x="700.5" y="58.5" width="38" height="38" fill="url(#gbtn)" stroke="#a4a4a4"/>
<path d="M735 94 L735 88 L729 94 Z" fill="#000"/>
<path d="M586 70 L586 90 L607 90 Z" fill="none" stroke="#444" stroke-width="1.5"/><path d="M590 80 L590 86 L596 86 Z" fill="none" stroke="#444" stroke-width="1.2"/>
<path d="M592 67 L604 77" stroke="#d02020" stroke-width="3.5"/>
<path d="M609 64v3M609 67 L606 85M609 67 L612 85" stroke="#111" stroke-width="1.2" fill="none"/><circle cx="609" cy="67" r="1.5" fill="#fff" stroke="#111"/>
<rect x="626.5" y="73.5" width="27" height="9" rx="1.5" fill="#fff" stroke="#555" stroke-width="1.2"/>
<path d="M629 74v3M632 74v2M635 74v3M638 74v2M641 74v4M644 74v2M647 74v3M650 74v2" stroke="#555" stroke-width="0.8"/>
<rect x="668.5" y="67.5" width="19" height="13" fill="none" stroke="#555" stroke-width="1.1"/><circle cx="684" cy="80" r="8" fill="none" stroke="#555" stroke-width="1.1"/>
<path d="M707 77 L727 65" stroke="#e04050" stroke-width="1.3"/>
<path d="M719 72 L719 87 L722 84 L724.5 89 L726.5 88 L724 83 L728 83 Z" fill="#fff" stroke="#555" stroke-width="1"/>
<rect x="748.5" y="58.5" width="38" height="38" fill="url(#gbtn)" stroke="#a4a4a4"/>
<path d="M783 94 L783 88 L777 94 Z" fill="#000"/>
<path d="M757 72 L770 66 L780 71 L767 77 Z M757 72 V86 L767 91 V77 M780 71 V85 L767 91" fill="none" stroke="#111" stroke-width="1.2"/>
<path d="M790.5 56V100" stroke="#d0d0d0" stroke-width="1"/>
<path d="M794 61h2v2h-2zM794 65h2v2h-2zM794 69h2v2h-2zM794 73h2v2h-2zM794 77h2v2h-2zM794 81h2v2h-2zM794 85h2v2h-2zM794 89h2v2h-2zM794 93h2v2h-2z" fill="#a8a8a8"/>
<path d="M814 76.5h9M818.5 72v9" stroke="#000" stroke-width="1.2"/>
<path d="M842.5 65.5m-1.6 0a1.6 1.6 0 1 0 3.2 0a1.6 1.6 0 1 0 -3.2 0M842.5 73.1m-1.6 0a1.6 1.6 0 1 0 3.2 0a1.6 1.6 0 1 0 -3.2 0M842.5 80.7m-1.6 0a1.6 1.6 0 1 0 3.2 0a1.6 1.6 0 1 0 -3.2 0M842.5 88.3m-1.6 0a1.6 1.6 0 1 0 3.2 0a1.6 1.6 0 1 0 -3.2 0M850.1 65.5m-1.6 0a1.6 1.6 0 1 0 3.2 0a1.6 1.6 0 1 0 -3.2 0M850.1 73.1m-1.6 0a1.6 1.6 0 1 0 3.2 0a1.6 1.6 0 1 0 -3.2 0M850.1 80.7m-1.6 0a1.6 1.6 0 1 0 3.2 0a1.6 1.6 0 1 0 -3.2 0M850.1 88.3m-1.6 0a1.6 1.6 0 1 0 3.2 0a1.6 1.6 0 1 0 -3.2 0M857.7 65.5m-1.6 0a1.6 1.6 0 1 0 3.2 0a1.6 1.6 0 1 0 -3.2 0M857.7 73.1m-1.6 0a1.6 1.6 0 1 0 3.2 0a1.6 1.6 0 1 0 -3.2 0M857.7 80.7m-1.6 0a1.6 1.6 0 1 0 3.2 0a1.6 1.6 0 1 0 -3.2 0M857.7 88.3m-1.6 0a1.6 1.6 0 1 0 3.2 0a1.6 1.6 0 1 0 -3.2 0M865.3 65.5m-1.6 0a1.6 1.6 0 1 0 3.2 0a1.6 1.6 0 1 0 -3.2 0M865.3 73.1m-1.6 0a1.6 1.6 0 1 0 3.2 0a1.6 1.6 0 1 0 -3.2 0M865.3 80.7m-1.6 0a1.6 1.6 0 1 0 3.2 0a1.6 1.6 0 1 0 -3.2 0M865.3 88.3m-1.6 0a1.6 1.6 0 1 0 3.2 0a1.6 1.6 0 1 0 -3.2 0" fill="#e81010"/>
<path d="M875.5 60V96" stroke="#d8d8d8" stroke-width="1"/>
<path d="M885 76 L907 88 M893 65 C893 72 898 79 907 79" stroke="#333" stroke-width="1.2" fill="none"/>
<circle cx="885" cy="76" r="1.7" fill="#e81010"/>
<circle cx="907" cy="88" r="1.7" fill="#e81010"/>
<circle cx="893" cy="65" r="1.7" fill="#e81010"/>
<circle cx="907" cy="79" r="1.7" fill="#e81010"/>
<path d="M919 78 L943 63 M928 88 C930 80 936 75 943 75" stroke="#333" stroke-width="1.2" fill="none"/>
<circle cx="919" cy="78" r="1.6" fill="#e81010"/>
<circle cx="925" cy="74.5" r="1.6" fill="#e81010"/>
<circle cx="931" cy="71" r="1.6" fill="#e81010"/>
<circle cx="937" cy="67" r="1.6" fill="#e81010"/>
<circle cx="943" cy="63" r="1.6" fill="#e81010"/>
<circle cx="928" cy="88" r="1.6" fill="#e81010"/>
<circle cx="930" cy="82" r="1.6" fill="#e81010"/>
<circle cx="935" cy="77" r="1.6" fill="#e81010"/>
<circle cx="943" cy="75" r="1.6" fill="#e81010"/>
<path d="M957.5 66.5 L967 78.5 L977 74.5 M967 78.5 C966 82 964 85 963 88" stroke="#333" stroke-width="1.2" fill="none"/><path d="M963 75 A4.8 4.8 0 0 1 972.5 74.5" stroke="#888" fill="none"/>
<circle cx="967" cy="78.5" r="1.7" fill="#e81010"/>
<path d="M991 86 L1000 70" stroke="#333" stroke-width="1.2"/><circle cx="1004" cy="74" r="6.5" fill="none" stroke="#333" stroke-width="1.2"/>
<circle cx="998" cy="71" r="1.7" fill="#e81010"/>
<path d="M1024 78 L1046 66 M1033 88 C1034 80 1040 75 1046 74" stroke="#333" stroke-width="1.2" fill="none"/>
<circle cx="1035" cy="71" r="1.7" fill="#e81010"/>
<circle cx="1046" cy="87.5" r="1.7" fill="#e81010"/>
<circle cx="1070" cy="77" r="11" fill="none" stroke="#333" stroke-width="1.2"/>
<circle cx="1070" cy="66" r="1.7" fill="#e81010"/>
<circle cx="1059" cy="77" r="1.7" fill="#e81010"/>
<circle cx="1081" cy="77" r="1.7" fill="#e81010"/>
<circle cx="1070" cy="88" r="1.7" fill="#e81010"/>
<circle cx="1070" cy="77" r="1.7" fill="#e81010"/>
<path d="M1092.5 60V96" stroke="#d8d8d8" stroke-width="1"/>
<path d="M1101 78 L1125 65 M1110 88 C1111 81 1117 76 1125 74" stroke="#333" stroke-width="1.2" fill="none"/>
<circle cx="1113" cy="72" r="1.7" fill="#e81010"/>
<circle cx="1114" cy="79" r="1.7" fill="#e81010"/>
<rect x="1135.5" y="67.5" width="25" height="19" fill="none" stroke="#222" stroke-width="1.5"/><path d="M1141 83 L1156 70" stroke="#aaa"/>
<circle cx="1148" cy="77" r="1.7" fill="#e81010"/>
<path d="M1169.5 60V96" stroke="#d8d8d8" stroke-width="1"/>
<path d="M1180 73 L1202 64 M1188 88 C1190 80 1196 76 1202 75" stroke="#333" stroke-width="1.2" fill="none"/><path d="M1179 74l5-3v3zM1190 88l3-5 2 3z" fill="#111"/>
<circle cx="1187" cy="73.5" r="1.7" fill="#e81010"/>
<circle cx="1191" cy="79" r="1.7" fill="#e81010"/>
<text x="1212" y="90" font-family="Liberation Sans" font-size="11" fill="#111">1</text><text x="1230" y="79" font-family="Liberation Sans" font-size="11" fill="#111">2</text>
<path d="M1214 75l4-3M1221 72l12-6" stroke="#333" stroke-width="1.2" stroke-dasharray="2 1.5"/>
<circle cx="1221" cy="73.5" r="1.7" fill="#e81010"/>
<path d="M1246.5 60V96" stroke="#d8d8d8" stroke-width="1"/>
<path d="M1254 74 L1280 82 M1270 64 L1266 90" stroke="#333" stroke-width="1.2"/>
<circle cx="1267.5" cy="79" r="1.7" fill="#e81010"/>
<path d="M1292 79 L1302 82 M1313 68 L1310 79" stroke="#333" stroke-width="1.2"/>
<circle cx="1308" cy="84" r="1.7" fill="#e81010"/>
<path d="M1324.5 60V96" stroke="#d8d8d8" stroke-width="1"/>
<rect x="1327.5" y="60.5" width="34" height="34" fill="url(#gpress)" stroke="#6a6a6a"/>
<text x="1345" y="83" text-anchor="middle" font-family="Liberation Sans" font-size="13.5" fill="#202020">Auto</text>
<path d="M1365.5 60V96" stroke="#d8d8d8" stroke-width="1"/>
<text x="1373" y="73" font-family="Liberation Sans" font-size="11" fill="#111">y</text><text x="1392" y="91" font-family="Liberation Sans" font-size="11" fill="#111">x</text>
<path d="M1383 64V81H1400" stroke="#333" stroke-width="1.2" fill="none"/>
<circle cx="1397" cy="66" r="1.7" fill="#e81010"/>
<path d="M1408 87 L1426 69 L1434 87 Z" fill="none" stroke="#333" stroke-width="1.2"/><text x="1411" y="77" font-family="Liberation Sans" font-size="11" fill="#111">r</text><text x="1423" y="86" font-family="Liberation Sans" font-size="10" fill="#111">a</text>
<circle cx="1426" cy="69" r="1.7" fill="#e81010"/>
<path d="M1442.5 60V96" stroke="#d8d8d8" stroke-width="1"/>
<path d="M1454 68H1472M1454 68V85" stroke="#888" stroke-dasharray="1 1"/>
<circle cx="1454" cy="68" r="2.2" fill="#e81010"/>
<circle cx="1472" cy="68" r="1.3" fill="#111"/>
<circle cx="1454" cy="85" r="1.3" fill="#111"/>
<text x="1457" y="90" font-family="Liberation Sans" font-size="11" fill="#111">1</text><text x="1470" y="82" font-family="Liberation Sans" font-size="11" fill="#111">2</text>
<path d="M1489 85H1506M1506 68V85" stroke="#888" stroke-dasharray="1 1"/>
<circle cx="1506" cy="85" r="2.2" fill="#e81010"/>
<circle cx="1506" cy="68" r="1.3" fill="#111"/>
<circle cx="1489" cy="85" r="1.3" fill="#111"/>
<text x="1488" y="80" font-family="Liberation Sans" font-size="11" fill="#111">1</text><text x="1497" y="73" font-family="Liberation Sans" font-size="11" fill="#111">2</text>
<path d="M1519.5 60V96" stroke="#d8d8d8" stroke-width="1"/>
<rect x="1529.5" y="67.5" width="16" height="13" rx="2" fill="none" stroke="#f0c0c0"/><rect x="1535.5" y="71.5" width="16" height="13" rx="2" fill="none" stroke="#f0c0c0"/><circle cx="1535" cy="74" r="4" fill="none" stroke="#f0c0c0"/>
<circle cx="1540" cy="77" r="1.6" fill="#e04040"/>
<path d="M1561.5 60V96" stroke="#d8d8d8" stroke-width="1"/>
<rect x="1565.5" y="60.5" width="34" height="34" fill="url(#gpress)" stroke="#6a6a6a"/>
<path d="M1577 77.5h9M1581.5 73v9" stroke="#000" stroke-width="1.2"/>
<path d="M1604 76.5h25M1616.5 64v25" stroke="#000" stroke-width="1.2"/>
<circle cx="1616.5" cy="76.5" r="4" fill="#f8c8c8" fill-opacity="0.6" stroke="#e02020" stroke-width="1"/><path d="M1612.5 76.5h8M1616.5 72.5v8" stroke="#e02020"/>
<path d="M1639 76.5h25" stroke="#000" stroke-width="1.2"/>
<circle cx="1651.5" cy="76.5" r="4" fill="#f8c8c8" fill-opacity="0.6" stroke="#e02020" stroke-width="1"/><path d="M1647.5 76.5h8M1651.5 72.5v8" stroke="#e02020"/>
<path d="M1686.5 64v25" stroke="#000" stroke-width="1.2"/>
<circle cx="1686.5" cy="76.5" r="4" fill="#f8c8c8" fill-opacity="0.6" stroke="#e02020" stroke-width="1"/><path d="M1682.5 76.5h8M1686.5 72.5v8" stroke="#e02020"/>
<path d="M1712 87 L1732 75" stroke="#333" stroke-width="1.2"/><path d="M1712.9 69.0L1713.2 65.0M1717.6 69.9L1718.8 66.1M1722.3 72.3L1724.6 69.0M1725.4 75.0L1728.3 72.3M1729.5 82.8L1733.4 81.9M1730.0 87.2L1734.0 87.2" stroke="#888" stroke-width="1.1"/>
<circle cx="1712" cy="87" r="4" fill="#f8c8c8" fill-opacity="0.6" stroke="#e02020" stroke-width="1"/><path d="M1708 87h8M1712 83v8" stroke="#e02020"/>
<path d="M1743.5 60V96" stroke="#d8d8d8" stroke-width="1"/>
<circle cx="1760" cy="70.5" r="4" fill="#f8c8c8" fill-opacity="0.6" stroke="#e02020" stroke-width="1"/><path d="M1756 70.5h8M1760 66.5v8" stroke="#e02020"/>
<path d="M1762 72 L1762 85 L1765 82 L1767 87 L1769 86 L1767 81 L1771 81 Z" fill="#f4f4f4" stroke="#606060" stroke-width="0.9"/>
<circle cx="1792" cy="72" r="3.2" fill="none" stroke="#000" stroke-width="1.8"/><path d="M1795 72h13v4M1804 72v4" stroke="#000" stroke-width="2.2" fill="none"/>
<circle cx="1798" cy="85.5" r="4" fill="#f8c8c8" fill-opacity="0.6" stroke="#e02020" stroke-width="1"/><path d="M1794 85.5h8M1798 81.5v8" stroke="#e02020"/></svg><svg width="2076" height="875" style="position:absolute;left:0;top:0"><rect x="1550.5" y="101.5" width="324" height="22" fill="#d8d8d8" stroke="#c4c4c4"/>
<text x="1555" y="119.5" font-family="Liberation Sans" font-size="15" fill="#111" textLength="114" lengthAdjust="spacing" >Lista de camadas</text>
<rect x="1831.5" y="110.0" width="7" height="6" fill="none" stroke="#111" stroke-width="1.4"/><path d="M1834 109.0V107.0H1841V113.0H1839" fill="none" stroke="#111" stroke-width="1.4"/>
<path d="M1856.5 108.0l9 9m0-9l-9 9" stroke="#222" stroke-width="1.8"/>
<rect x="1551.5" y="127.5" width="62" height="23" fill="#e1e1e1" stroke="#adadad"/>
<rect x="1616.5" y="127.5" width="62" height="23" fill="#e1e1e1" stroke="#adadad"/>
<rect x="1681.5" y="127.5" width="62" height="23" fill="#e1e1e1" stroke="#adadad"/>
<rect x="1746.5" y="127.5" width="62" height="23" fill="#cdcdcd" stroke="#adadad"/>
<rect x="1811.5" y="127.5" width="62" height="23" fill="#e1e1e1" stroke="#adadad"/>
<g transform="translate(1582 139) scale(1.15)"><path d="M-8 0 C-4 -7 4 -7 8 0 C4 7 -4 7 -8 0 Z" fill="#000"/><ellipse cx="0" cy="0.5" rx="4" ry="3.6" fill="#fff"/><circle cx="0" cy="1" r="2.4" fill="#000"/><path d="M-1 -1.5v2" stroke="#fff" stroke-width="1"/></g>
<g transform="translate(1647 139) scale(1.15)"><path d="M-8 0 C-4 -7 4 -7 8 0 C4 7 -4 7 -8 0 Z" fill="#a8a8a8"/><ellipse cx="0" cy="0.5" rx="4" ry="3.6" fill="#e1e1e1"/><circle cx="0" cy="1" r="2.4" fill="#a8a8a8"/><path d="M-1 -1.5v2" stroke="#e1e1e1" stroke-width="1"/></g>
<path d="M1705 139h14M1712 132v14" stroke="#d01818" stroke-width="4"/>
<path d="M1770 139h14" stroke="#909090" stroke-width="3"/>
<g transform="translate(1841 138.5) scale(1.0)"><path d="M-9 9 L5 -6 L8 -3 L-6 12 Z" fill="#e8b040" stroke="#8a6020" stroke-width="0.8"/><path d="M5 -6 L7 -8 L10 -5 L8 -3 Z" fill="#e04040"/><path d="M-9 9 L-6 12 L-10 13 Z" fill="#333"/></g>
<rect x="1550.5" y="152.5" width="323" height="128" fill="#fff" stroke="#828282"/>
<rect x="1551" y="154" width="301" height="24" fill="#d9d9d9"/>
<g transform="translate(1562.5 165.3) scale(0.95)"><path d="M-8 0 C-4 -7 4 -7 8 0 C4 7 -4 7 -8 0 Z" fill="#0d2a4a"/><ellipse cx="0" cy="0.5" rx="4" ry="3.6" fill="#c8dcec"/><circle cx="0" cy="1" r="2.4" fill="#0d2a4a"/><path d="M-1 -1.5v2" stroke="#c8dcec" stroke-width="1"/></g>
<path d="M1576.6 166V163A3.9 3.9 0 0 1 1584.4 163V166" fill="none" stroke="#7ba0c8" stroke-width="2"/><rect x="1575.5" y="165.5" width="10" height="7.5" rx="0.8" fill="#7ba0c8"/>
<text x="1593" y="171.5" font-family="Liberation Sans" font-size="15" fill="#000" >0</text>
<g transform="translate(1562.5 189.3) scale(0.95)"><path d="M-8 0 C-4 -7 4 -7 8 0 C4 7 -4 7 -8 0 Z" fill="#000"/><ellipse cx="0" cy="0.5" rx="4" ry="3.6" fill="#fff"/><circle cx="0" cy="1" r="2.4" fill="#000"/><path d="M-1 -1.5v2" stroke="#fff" stroke-width="1"/></g>
<path d="M1576.6 190V187A3.9 3.9 0 0 1 1584.4 187V190" fill="none" stroke="#a8a8a8" stroke-width="2"/><rect x="1575.5" y="189.5" width="10" height="7.5" rx="0.8" fill="#a8a8a8"/>
<text x="1593" y="195.5" font-family="Liberation Sans" font-size="15" fill="#000" textLength="40" lengthAdjust="spacing" >Cotas</text>
<g transform="translate(1562.5 213.3) scale(0.95)"><path d="M-8 0 C-4 -7 4 -7 8 0 C4 7 -4 7 -8 0 Z" fill="#000"/><ellipse cx="0" cy="0.5" rx="4" ry="3.6" fill="#fff"/><circle cx="0" cy="1" r="2.4" fill="#000"/><path d="M-1 -1.5v2" stroke="#fff" stroke-width="1"/></g>
<path d="M1576.6 214V211A3.9 3.9 0 0 1 1584.4 211V214" fill="none" stroke="#a8a8a8" stroke-width="2"/><rect x="1575.5" y="213.5" width="10" height="7.5" rx="0.8" fill="#a8a8a8"/>
<text x="1593" y="219.5" font-family="Liberation Sans" font-size="15" fill="#000" textLength="137" lengthAdjust="spacing" >Eixos e Coordenadas</text>
<g transform="translate(1562.5 237.3) scale(0.95)"><path d="M-8 0 C-4 -7 4 -7 8 0 C4 7 -4 7 -8 0 Z" fill="#000"/><ellipse cx="0" cy="0.5" rx="4" ry="3.6" fill="#fff"/><circle cx="0" cy="1" r="2.4" fill="#000"/><path d="M-1 -1.5v2" stroke="#fff" stroke-width="1"/></g>
<path d="M1576.6 238V235A3.9 3.9 0 0 1 1584.4 235V238" fill="none" stroke="#a8a8a8" stroke-width="2"/><rect x="1575.5" y="237.5" width="10" height="7.5" rx="0.8" fill="#a8a8a8"/>
<text x="1593" y="243.5" font-family="Liberation Sans" font-size="15" fill="#000" textLength="142" lengthAdjust="spacing" >Indicação e Chamada</text>
<g transform="translate(1562.5 261.3) scale(0.95)"><path d="M-8 0 C-4 -7 4 -7 8 0 C4 7 -4 7 -8 0 Z" fill="#000"/><ellipse cx="0" cy="0.5" rx="4" ry="3.6" fill="#fff"/><circle cx="0" cy="1" r="2.4" fill="#000"/><path d="M-1 -1.5v2" stroke="#fff" stroke-width="1"/></g>
<path d="M1576.6 262V259A3.9 3.9 0 0 1 1584.4 259V262" fill="none" stroke="#a8a8a8" stroke-width="2"/><rect x="1575.5" y="261.5" width="10" height="7.5" rx="0.8" fill="#a8a8a8"/>
<text x="1593" y="267.5" font-family="Liberation Sans" font-size="15" fill="#000" textLength="51" lengthAdjust="spacing" >Internas</text>
<rect x="1853" y="154" width="19" height="126" fill="#f0f0f0"/>
<rect x="1853" y="175" width="19" height="69" fill="#cdcdcd"/>
<path d="M1858 168.5l4.5-4.5 4.5 4.5M1858 266.5l4.5 4.5 4.5-4.5" stroke="#505050" stroke-width="2" fill="none"/>
<rect x="1550.5" y="288.5" width="324" height="22" fill="#d8d8d8" stroke="#c4c4c4"/>
<text x="1555" y="306.5" font-family="Liberation Sans" font-size="15" fill="#111" textLength="147" lengthAdjust="spacing" >Editor de propriedade</text>
<rect x="1831.5" y="297.0" width="7" height="6" fill="none" stroke="#111" stroke-width="1.4"/><path d="M1834 296.0V294.0H1841V300.0H1839" fill="none" stroke="#111" stroke-width="1.4"/>
<path d="M1856.5 295.0l9 9m0-9l-9 9" stroke="#222" stroke-width="1.8"/>
<rect x="1550.5" y="313.5" width="323" height="286" fill="#f0f0f0" stroke="#828282"/>
<text x="1562" y="341" font-family="Liberation Sans" font-size="13.5" fill="#000" textLength="49" lengthAdjust="spacing" >Seleção:</text>
<rect x="1619.5" y="325.5" width="243" height="21" fill="#e1e1e1" stroke="#adadad"/>
<text x="1623.5" y="341" font-family="Liberation Sans" font-size="13.5" fill="#000" textLength="72" lengthAdjust="spacing" >Sem seleção</text>
<path d="M1846.5 333.5l4.5 4.5 4.5-4.5" stroke="#333" stroke-width="1.1" fill="none"/>
<rect x="1562.5" y="363.5" width="300" height="191" fill="none" stroke="#dcdcdc"/>
<rect x="1568" y="356" width="122" height="12" fill="#f0f0f0"/>
<text x="1572" y="367" font-family="Liberation Sans" font-size="13.5" fill="#000" textLength="114" lengthAdjust="spacing" >Propriedades gerais</text>
<text x="1706.5" y="393.5" font-family="Liberation Sans" font-size="13.5" fill="#7a7a7a" textLength="51" lengthAdjust="spacing" text-anchor="end" >Camada:</text>
<rect x="1714" y="377" width="137" height="22" fill="#cccccc"/>
<path d="M1833.5 386l4.5 4.5 4.5-4.5" stroke="#a8a8a8" stroke-width="1" fill="none"/>
<text x="1706.5" y="417.5" font-family="Liberation Sans" font-size="13.5" fill="#7a7a7a" textLength="24" lengthAdjust="spacing" text-anchor="end" >Cor:</text>
<rect x="1714" y="401" width="137" height="22" fill="#cccccc"/>
<path d="M1833.5 410l4.5 4.5 4.5-4.5" stroke="#a8a8a8" stroke-width="1" fill="none"/>
<rect x="1719.5" y="407.5" width="15" height="10" fill="#fff" stroke="#222"/>
<text x="1738" y="417.5" font-family="Liberation Sans" font-size="13.5" fill="#8a8a8a" textLength="76" lengthAdjust="spacing" >Pela Camada</text>
<text x="1706.5" y="441.5" font-family="Liberation Sans" font-size="13.5" fill="#7a7a7a" textLength="100" lengthAdjust="spacing" text-anchor="end" >Largura da Linha:</text>
<rect x="1714" y="425" width="137" height="22" fill="#cccccc"/>
<path d="M1833.5 434l4.5 4.5 4.5-4.5" stroke="#a8a8a8" stroke-width="1" fill="none"/>
<path d="M1719 436.5h13" stroke="#8a8a8a"/>
<text x="1738" y="441.5" font-family="Liberation Sans" font-size="13.5" fill="#8a8a8a" textLength="76" lengthAdjust="spacing" >Pela Camada</text>
<text x="1706.5" y="465.5" font-family="Liberation Sans" font-size="13.5" fill="#7a7a7a" textLength="82" lengthAdjust="spacing" text-anchor="end" >Tipo de Linha:</text>
<rect x="1714" y="449" width="137" height="22" fill="#cccccc"/>
<path d="M1833.5 458l4.5 4.5 4.5-4.5" stroke="#a8a8a8" stroke-width="1" fill="none"/>
<text x="1718" y="465.5" font-family="Liberation Sans" font-size="13.5" fill="#8a8a8a" textLength="76" lengthAdjust="spacing" >Pela Camada</text>
<text x="1706.5" y="489.5" font-family="Liberation Sans" font-size="13.5" fill="#7a7a7a" textLength="132" lengthAdjust="spacing" text-anchor="end" >Escala do tipo de linha:</text>
<rect x="1714.5" y="474.5" width="136" height="22" fill="#f0f0f0" stroke="#d4d4d4"/>
<text x="1706.5" y="515.5" font-family="Liberation Sans" font-size="13.5" fill="#7a7a7a" textLength="114" lengthAdjust="spacing" text-anchor="end" >Ordem do Desenho:</text>
<rect x="1714.5" y="500.5" width="136" height="22" fill="#f0f0f0" stroke="#d4d4d4"/>
<text x="1706.5" y="541.5" font-family="Liberation Sans" font-size="13.5" fill="#7a7a7a" textLength="73" lengthAdjust="spacing" text-anchor="end" >Manipulador:</text>
<rect x="1714.5" y="526.5" width="136" height="22" fill="#f0f0f0" stroke="#d4d4d4"/>
<rect x="1550.5" y="606.5" width="324" height="22" fill="#d8d8d8" stroke="#c4c4c4"/>
<text x="1555" y="624.5" font-family="Liberation Sans" font-size="15" fill="#111" textLength="99" lengthAdjust="spacing" >Lista de blocos</text>
<rect x="1831.5" y="615.0" width="7" height="6" fill="none" stroke="#111" stroke-width="1.4"/><path d="M1834 614.0V612.0H1841V618.0H1839" fill="none" stroke="#111" stroke-width="1.4"/>
<path d="M1856.5 613.0l9 9m0-9l-9 9" stroke="#222" stroke-width="1.8"/>
<rect x="1551.5" y="632.5" width="38" height="23" fill="#e1e1e1" stroke="#adadad"/>
<rect x="1592.5" y="632.5" width="37" height="23" fill="#e1e1e1" stroke="#adadad"/>
<rect x="1632.5" y="632.5" width="38" height="23" fill="#e1e1e1" stroke="#adadad"/>
<rect x="1673.5" y="632.5" width="38" height="23" fill="#cdcdcd" stroke="#adadad"/>
<rect x="1714.5" y="632.5" width="37" height="23" fill="#cdcdcd" stroke="#adadad"/>
<rect x="1754.5" y="632.5" width="38" height="23" fill="#e1e1e1" stroke="#adadad"/>
<rect x="1795.5" y="632.5" width="37" height="23" fill="#cdcdcd" stroke="#adadad"/>
<rect x="1835.5" y="632.5" width="38" height="23" fill="#e1e1e1" stroke="#adadad"/>
<g transform="translate(1570 644) scale(1.1)"><path d="M-8 0 C-4 -7 4 -7 8 0 C4 7 -4 7 -8 0 Z" fill="#000"/><ellipse cx="0" cy="0.5" rx="4" ry="3.6" fill="#fff"/><circle cx="0" cy="1" r="2.4" fill="#000"/><path d="M-1 -1.5v2" stroke="#fff" stroke-width="1"/></g>
<g transform="translate(1611 644) scale(1.1)"><path d="M-8 0 C-4 -7 4 -7 8 0 C4 7 -4 7 -8 0 Z" fill="#a8a8a8"/><ellipse cx="0" cy="0.5" rx="4" ry="3.6" fill="#e1e1e1"/><circle cx="0" cy="1" r="2.4" fill="#a8a8a8"/><path d="M-1 -1.5v2" stroke="#e1e1e1" stroke-width="1"/></g>
<path d="M1644 644h14M1651 637v14" stroke="#d01818" stroke-width="4"/>
<path d="M1685 644h14" stroke="#909090" stroke-width="3"/>
<text x="1733" y="650" font-family="Liberation Sans" font-size="14" fill="#8a8a8a" text-anchor="middle" >a|b</text>
<g transform="translate(1773 643.5) scale(1.0)"><path d="M-9 9 L5 -6 L8 -3 L-6 12 Z" fill="#e8b040" stroke="#8a6020" stroke-width="0.8"/><path d="M5 -6 L7 -8 L10 -5 L8 -3 Z" fill="#e04040"/><path d="M-9 9 L-6 12 L-10 13 Z" fill="#333"/></g>
<path d="M1810 637h5v9h3l-5.5 6-5.5-6h3z" fill="#f4f4f4" stroke="#c0c0c0"/>
<rect x="1847" y="637" width="14" height="14" rx="1.5" fill="#e86a50" stroke="#d05838"/><path d="M1850.5 640.5l7 7m0-7l-7 7" stroke="#fff" stroke-width="2"/>
<rect x="1550.5" y="657.5" width="323" height="230" fill="#fff" stroke="#828282"/>
<g transform="translate(1562 669) scale(0.95)"><path d="M-8 0 C-4 -7 4 -7 8 0 C4 7 -4 7 -8 0 Z" fill="#000"/><ellipse cx="0" cy="0.5" rx="4" ry="3.6" fill="#fff"/><circle cx="0" cy="1" r="2.4" fill="#000"/><path d="M-1 -1.5v2" stroke="#fff" stroke-width="1"/></g>
<g transform="translate(1584 669) scale(0.7)"><path d="M-9 9 L5 -6 L8 -3 L-6 12 Z" fill="#e8b040" stroke="#8a6020" stroke-width="0.8"/><path d="M5 -6 L7 -8 L10 -5 L8 -3 Z" fill="#e04040"/><path d="M-9 9 L-6 12 L-10 13 Z" fill="#333"/></g>
<text x="1598.5" y="675" font-family="Liberation Sans" font-size="15" fill="#000" textLength="151" lengthAdjust="spacing" >Model (*Model_Space)</text>
<g transform="translate(1562 691) scale(0.95)"><path d="M-8 0 C-4 -7 4 -7 8 0 C4 7 -4 7 -8 0 Z" fill="#000"/><ellipse cx="0" cy="0.5" rx="4" ry="3.6" fill="#fff"/><circle cx="0" cy="1" r="2.4" fill="#000"/><path d="M-1 -1.5v2" stroke="#fff" stroke-width="1"/></g>
<text x="1598.5" y="697" font-family="Liberation Sans" font-size="15" fill="#000" textLength="154" lengthAdjust="spacing" >Layout1 (*Paper_Space)</text>
<path d="M1877 100.5H1913" stroke="#d8d8d8"/>
<path d="M1881 104h1.6v1.6h-1.6zM1885 104h1.6v1.6h-1.6zM1889 104h1.6v1.6h-1.6zM1893 104h1.6v1.6h-1.6zM1897 104h1.6v1.6h-1.6zM1901 104h1.6v1.6h-1.6zM1905 104h1.6v1.6h-1.6zM1909 104h1.6v1.6h-1.6z" fill="#a8a8a8"/>
<defs><linearGradient id="grt" x1="0" y1="0" x2="0" y2="1"><stop offset="0" stop-color="#8c8c8c"/><stop offset="0.4" stop-color="#c4c4c4"/><stop offset="1" stop-color="#e4e4e4"/></linearGradient></defs>
<rect x="1877.5" y="113.5" width="33" height="32" fill="url(#grt)" stroke="#8a8a8a"/>
<rect x="1882.5" y="117.5" width="25" height="24" fill="#fff" stroke="#7a7a7a"/>
<rect x="1883" y="118" width="24" height="3.5" fill="#111"/><rect x="1883.5" y="118.5" width="2.5" height="2.5" fill="#fff"/>
<rect x="1877.5" y="147.5" width="33" height="33" fill="url(#grt)" stroke="#8a8a8a"/>
<rect x="1882.5" y="151.5" width="25" height="25" fill="#fff" stroke="#7a7a7a"/>
<rect x="1883" y="152" width="24" height="3.5" fill="#111"/><rect x="1883.5" y="152.5" width="2.5" height="2.5" fill="#fff"/>
<rect x="1877.5" y="190.5" width="33" height="33" fill="url(#grt)" stroke="#8a8a8a"/>
<rect x="1882.5" y="194.5" width="25" height="25" fill="#fff" stroke="#7a7a7a"/>
<rect x="1883" y="195" width="24" height="3.5" fill="#111"/><rect x="1883.5" y="195.5" width="2.5" height="2.5" fill="#fff"/>
<rect x="1877.5" y="232.5" width="33" height="33" fill="url(#grt)" stroke="#8a8a8a"/>
<rect x="1882.5" y="236.5" width="25" height="25" fill="#fff" stroke="#7a7a7a"/>
<rect x="1883" y="237" width="24" height="3.5" fill="#111"/><rect x="1883.5" y="237.5" width="2.5" height="2.5" fill="#fff"/>
<path d="M1888 138 L1895 128 L1900 130 L1893 140Z" fill="#a0a0a0" stroke="#707070" stroke-width="0.6"/><path d="M1894 133 L1898 129" stroke="#e05050"/>
<rect x="1888.5" y="160.5" width="9" height="7" fill="none" stroke="#c0a050"/><circle cx="1896" cy="169" r="4" fill="none" stroke="#c0a050"/>
<path d="M1886 201h3v3h-3zM1886 206.5h3v3h-3zM1886 212h3v3h-3z" fill="#111"/><path d="M1891.5 201.5h13v2.5h-13zM1891.5 207h13v2.5h-13zM1891.5 212.5h13v2.5h-13z" fill="none" stroke="#777" stroke-width="0.8"/>
<path d="M1886 244h9M1886 247h11M1886 250h8M1886 253h11" stroke="#b0b0b0" stroke-width="0.9"/><path d="M1884 257.5h22" stroke="#999" stroke-width="1"/></svg><svg width="2076" height="875" style="position:absolute;left:0;top:0"><rect x="550.5" y="187.5" width="808" height="571" fill="none" stroke="#707070" stroke-opacity="0.5"/>
<rect x="551" y="188" width="807" height="570" fill="#f0f0f0"/>
<rect x="551" y="188" width="807" height="37" fill="#fff"/>
<g transform="translate(570 205.5)"><circle cx="0" cy="0" r="6.6" fill="#fafcff" stroke="#34406a" stroke-width="2.6"/><path d="M-4 0h8M0 -4v8" stroke="#b0b8d0" stroke-width="0.8"/><path d="M0 -1 L5.5 5.5" stroke="#e8b030" stroke-width="2.2"/><path d="M5 5 L7.5 7.5" stroke="#8a5a40" stroke-width="1.8"/></g>
<text x="585.5" y="212" font-family="Liberation Sans" font-size="15" fill="#000" textLength="170" lengthAdjust="spacing" >Preferências do aplicativo</text>
<path d="M1331 200l12 12m0-12l-12 12" stroke="#111" stroke-width="1.2"/>
<rect x="564.5" y="239.5" width="199" height="23" fill="#fff" stroke="#7a7a7a"/>
<text x="568" y="256" font-family="Liberation Sans" font-size="14" fill="#6e6e6e" textLength="29" lengthAdjust="spacing" >Filtro</text>
<rect x="777.5" y="243.5" width="12" height="12" fill="#f4f4f4" stroke="#555"/><rect x="779.5" y="245.5" width="12" height="12" fill="#fafafa" stroke="#222"/><path d="M781.5 251.5h8M785.5 247.5v8" stroke="#111"/>
<rect x="811.5" y="243.5" width="12" height="12" fill="#f4f4f4" stroke="#555"/><rect x="813.5" y="245.5" width="12" height="12" fill="#fafafa" stroke="#222"/><path d="M815.5 251.5h8" stroke="#111"/>
<text x="838" y="259" font-family="Liberation Sans" font-size="22" fill="#000" font-weight="700" textLength="327" lengthAdjust="spacing" >Widgets: Barras de Ferramentas</text>
<g transform="translate(1332.8 250.8) scale(0.62)"><path d="M-4.83 -4.05 A6.3 6.3 0 1 1 -1.09 6.20" fill="none" stroke="#e0b870" stroke-width="6.6"/><path d="M-11.8 -9.8 L-11.8 0.8 L-1.5 0.8 Z" fill="#fad892" stroke="#e0b870" stroke-width="1.1" stroke-linejoin="round"/><path d="M-4.83 -4.05 A6.3 6.3 0 1 1 -1.09 6.20" fill="none" stroke="#fad892" stroke-width="4.6"/></g>
<path d="M838 271.5H1345" stroke="#a0a0a0"/>
<rect x="564.5" y="271.5" width="266" height="438" fill="#fff" stroke="#828282"/>
<text x="618" y="289.0" font-family="Liberation Sans" font-size="15" fill="#111" textLength="109" lengthAdjust="spacing" >Comportamento</text>
<text x="618" y="311.0" font-family="Liberation Sans" font-size="15" fill="#111" textLength="36" lengthAdjust="spacing" >Cores</text>
<text x="618" y="333.0" font-family="Liberation Sans" font-size="15" fill="#111" textLength="43" lengthAdjust="spacing" >Fontes</text>
<text x="618" y="355.0" font-family="Liberation Sans" font-size="15" fill="#111" textLength="39" lengthAdjust="spacing" >Grade</text>
<path d="M572 369.0l4.5 4.5 4.5-4.5" stroke="#333" stroke-width="1.6" fill="none"/>
<text x="593" y="377.0" font-family="Liberation Sans" font-size="15" fill="#111" textLength="83" lengthAdjust="spacing" >Vista Gráfica</text>
<text x="618" y="399.0" font-family="Liberation Sans" font-size="15" fill="#111" textLength="66" lengthAdjust="spacing" >Aparência</text>
<text x="618" y="421.0" font-family="Liberation Sans" font-size="15" fill="#111" textLength="74" lengthAdjust="spacing" >Navegação</text>
<path d="M572 435.0l4.5 4.5 4.5-4.5" stroke="#333" stroke-width="1.6" fill="none"/>
<text x="593" y="443.0" font-family="Liberation Sans" font-size="15" fill="#111" textLength="55" lengthAdjust="spacing" >Widgets</text>
<text x="618" y="465.0" font-family="Liberation Sans" font-size="15" fill="#111" textLength="174" lengthAdjust="spacing" >Barra de Ferramentas CAD</text>
<text x="618" y="487.0" font-family="Liberation Sans" font-size="15" fill="#111" textLength="103" lengthAdjust="spacing" >Barra de menus</text>
<text x="618" y="509.0" font-family="Liberation Sans" font-size="15" fill="#111" textLength="99" lengthAdjust="spacing" >Barra de Status</text>
<rect x="615" y="514.5" width="195" height="22" fill="#cce8ff"/>
<text x="618" y="531.0" font-family="Liberation Sans" font-size="15" fill="#111" textLength="147" lengthAdjust="spacing" >Barras de Ferramentas</text>
<text x="618" y="553.0" font-family="Liberation Sans" font-size="15" fill="#111" textLength="148" lengthAdjust="spacing" >Editor de propriedade</text>
<text x="618" y="575.0" font-family="Liberation Sans" font-size="15" fill="#111" textLength="167" lengthAdjust="spacing" >Exibição de coordenadas</text>
<text x="618" y="597.0" font-family="Liberation Sans" font-size="15" fill="#111" textLength="30" lengthAdjust="spacing" >Guia</text>
<text x="618" y="619.0" font-family="Liberation Sans" font-size="15" fill="#111" textLength="125" lengthAdjust="spacing" >Linha de Comando</text>
<text x="618" y="641.0" font-family="Liberation Sans" font-size="15" fill="#111" textLength="99" lengthAdjust="spacing" >Lista de blocos</text>
<text x="618" y="663.0" font-family="Liberation Sans" font-size="15" fill="#111" textLength="115" lengthAdjust="spacing" >Lista de camadas</text>
<text x="618" y="685.0" font-family="Liberation Sans" font-size="15" fill="#111" font-weight="700" textLength="156" lengthAdjust="spacing" >Matriz de ferramentas</text>
<rect x="811" y="272" width="19" height="437" fill="#f0f0f0"/>
<rect x="811" y="561" width="19" height="127" fill="#cdcdcd"/>
<path d="M816.5 286.5l4.5-4.5 4.5 4.5M816.5 696l4.5 4.5 4.5-4.5" stroke="#505050" stroke-width="2" fill="none"/>
<text x="849" y="308" font-family="Liberation Sans" font-size="13" fill="#000" textLength="111" lengthAdjust="spacing" >Tamanho do Ícone:</text>
<rect x="968.5" y="292.5" width="49" height="22" fill="#fff" stroke="#7a7a7a"/>
<text x="973" y="308" font-family="Liberation Sans" font-size="13" fill="#000" >32</text>
<path d="M1003 301l4.5 4.5 4.5-4.5" stroke="#333" stroke-width="1.1" fill="none"/>
<text x="1026" y="308" font-family="Liberation Sans" font-size="13" fill="#000" >px</text>
<rect x="849.5" y="329.5" width="484" height="54" fill="none" stroke="#d8d8d8"/>
<rect x="855" y="322" width="199" height="14" fill="#f0f0f0"/>
<text x="859" y="334" font-family="Liberation Sans" font-size="13" fill="#000" textLength="190" lengthAdjust="spacing" >Barra de Ferramentas de Opções</text>
<text x="861" y="366" font-family="Liberation Sans" font-size="13" fill="#000" textLength="164" lengthAdjust="spacing" >Caracter da Tecla de Atalho:</text>
<rect x="1033.5" y="349.5" width="136" height="24" fill="#fff" stroke="#7a7a7a"/>
<text x="1038" y="366" font-family="Liberation Sans" font-size="13" fill="#000" >,</text>
<rect x="1054" y="719" width="89" height="24" fill="#e1e1e1" stroke="#0078d7" stroke-width="2"/>
<text x="1098" y="736" font-family="Liberation Sans" font-size="13.5" fill="#000" text-anchor="middle" >OK</text>
<rect x="1153.5" y="718.5" width="90" height="25" fill="#e1e1e1" stroke="#adadad"/>
<text x="1198.5" y="736" font-family="Liberation Sans" font-size="13.5" fill="#000" textLength="50" lengthAdjust="spacing" text-anchor="middle" >Cancelar</text>
<rect x="1253.5" y="718.5" width="90" height="25" fill="#e1e1e1" stroke="#adadad"/>
<text x="1298.5" y="736" font-family="Liberation Sans" font-size="13.5" fill="#000" textLength="39" lengthAdjust="spacing" text-anchor="middle" >Aplicar</text></svg><svg width="2076" height="875" style="position:absolute;left:0;top:0"><path d="M837.4 439.7 C838.6 439.2 841.9 436.3 844.9 436.7 C847.9 437.1 852.2 439.3 855.3 441.9 C858.4 444.5 861.8 448.1 863.4 452.3 C865.0 456.5 865.0 459.7 864.9 467.1 C864.8 474.5 863.2 487.0 862.7 496.9 C862.2 506.8 861.9 520.4 862.0 526.6 C862.1 532.8 862.4 531.5 863.4 534.0 C864.4 536.5 867.5 539.2 867.9 541.4 C868.3 543.6 867.6 544.4 865.7 547.4 C863.8 550.4 858.7 556.0 856.7 559.3 C854.8 562.6 854.7 560.1 854.0 567.1 C853.3 574.1 852.1 590.5 852.3 601.4 C852.4 612.3 854.3 625.1 854.9 632.3 C855.5 639.4 855.0 640.9 855.7 644.3 C856.4 647.7 858.4 648.6 859.1 652.9 C859.8 657.2 859.9 664.3 860.0 670.0 C860.1 675.7 860.0 684.2 860.0 687.1 L848.9 687.1 L859.1 671.7" fill="none" stroke="#e8101a" stroke-width="2.7" stroke-linecap="round" stroke-linejoin="round"/>
<path d="M924 497.8 C918 488 914 478 919.2 466 C925 459 945 457 958 467 C963 472 960 481 956 486 C948 496 941 505 935 513 C931 520 927 527 921.8 532.7" fill="none" stroke="#e8101a" stroke-width="2.7" stroke-linecap="round" stroke-linejoin="round"/>
<path d="M921 553 C920 560 920 566 922 568 C926 569 930 569 932 567 C933 562 932 556 931 553 C928 551 923 551 921 553 Z" fill="none" stroke="#e8101a" stroke-width="2.7" stroke-linecap="round" stroke-linejoin="round"/>
<path d="M2026.1 137.6 C2025.3 133.9 2022.1 122.4 2021.5 115.7 C2020.9 109.0 2019.9 102.6 2022.5 97.4 C2025.1 92.2 2032.8 87.0 2037.0 84.6 C2041.2 82.2 2042.8 81.9 2048.0 82.8 C2053.2 83.7 2063.9 86.1 2068.2 90.1 C2072.5 94.1 2072.2 102.3 2074.0 106.6 C2075.8 110.9 2079.1 113.0 2079.0 116.0 C2078.9 119.0 2076.9 120.3 2073.6 124.8 C2070.3 129.3 2062.9 138.8 2059.0 143.1 C2055.1 147.4 2051.7 148.3 2049.9 150.4 C2048.1 152.5 2049.1 152.2 2048.0 155.9 C2046.9 159.6 2044.6 167.8 2043.5 172.4 C2042.4 177.0 2041.9 181.5 2041.6 183.3" fill="none" stroke="#e8101a" stroke-width="2.7" stroke-linecap="round" stroke-linejoin="round"/>
<path d="M2051 208.5 C2047 206 2041 206.5 2040.8 212 C2040.6 217 2046 217.5 2051 216 M2050.8 207 C2051 211 2051 214.5 2052.6 217.5" fill="none" stroke="#e8101a" stroke-width="2.7" stroke-linecap="round" stroke-linejoin="round"/>
<path d="M1995.0 186.0 C1993.8 188.6 1990.7 196.2 1987.5 201.7 C1984.3 207.2 1978.3 214.3 1975.6 218.8 C1972.8 223.3 1973.2 225.2 1971.0 228.5 C1968.8 231.8 1964.4 235.2 1962.2 238.9 C1960.0 242.6 1960.3 246.5 1957.8 250.7 C1955.3 254.9 1949.6 261.7 1947.4 264.1 C1945.2 266.5 1946.9 263.6 1944.4 265.0 C1941.9 266.4 1936.6 270.4 1932.5 272.3 C1928.4 274.2 1924.0 275.3 1920.0 276.5 C1916.0 277.7 1910.7 279.2 1908.8 279.7 M1923.6 269.3 L1894 279 L1925 293.8" fill="none" stroke="#e8101a" stroke-width="2.7" stroke-linecap="round" stroke-linejoin="round"/></svg>
</body></html>
